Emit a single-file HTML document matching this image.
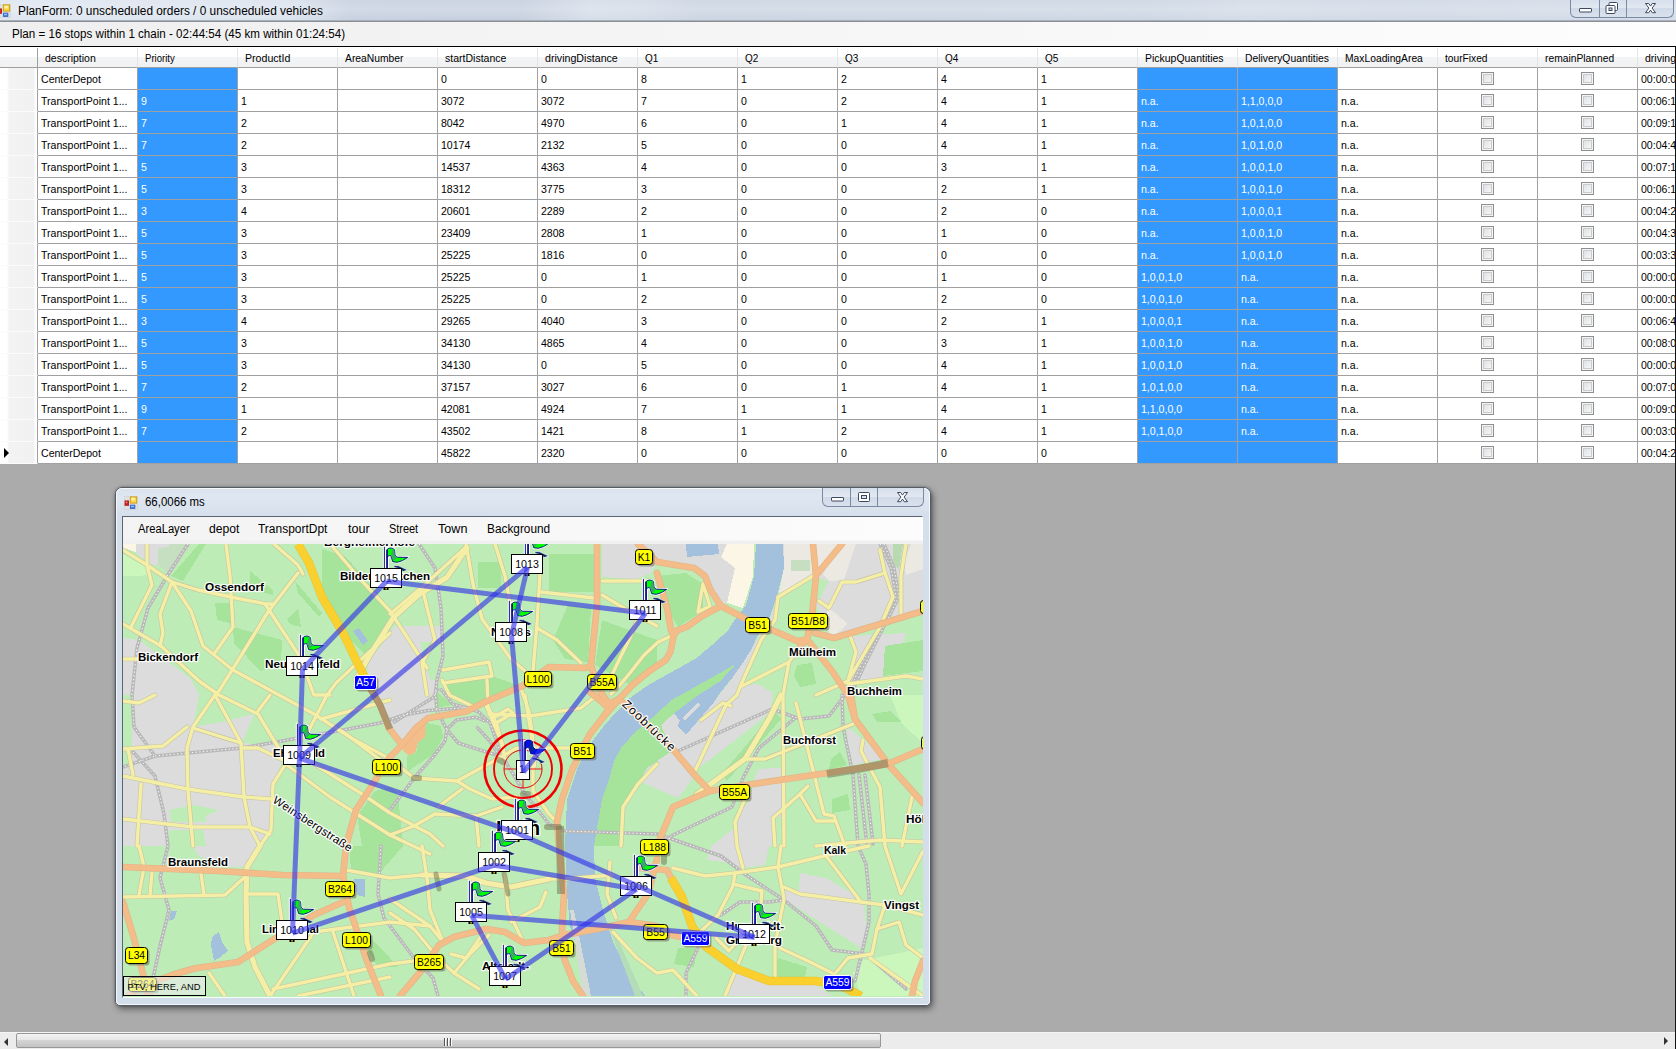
<!DOCTYPE html>
<html lang="en"><head><meta charset="utf-8"><title>PlanForm</title>
<style>
*{box-sizing:border-box}
html,body{margin:0;padding:0}
body{width:1676px;height:1049px;overflow:hidden;position:relative;background:#ababab;
 font-family:"Liberation Sans",sans-serif;color:#000;-webkit-font-smoothing:antialiased}
.abs{position:absolute}
#tbar{left:0;top:0;width:1676px;height:21px;background:linear-gradient(rgba(255,255,255,.10),rgba(255,255,255,.22) 45%,rgba(255,255,255,0) 100%),linear-gradient(90deg,#dfe6f0 0px,#dbe3ee 290px,#c6d0df 350px,#c5cfde 520px,#d5dde9 590px,#d3dbe7 640px,#cad4e2 700px,#ccd6e3 1150px,#d2dbe7 1250px,#cfd8e5 1400px,#d3dce8 1676px)}
#tline{left:0;top:20px;width:1676px;height:2px;background:linear-gradient(#b8bfc9,#7c7f85)}
#ttext{left:17.5px;top:4px;transform:scaleX(.987);font-size:12px;line-height:15px;white-space:nowrap;transform-origin:0 0}
#status{left:0;top:22px;width:1676px;height:24px;background:linear-gradient(90deg,#efefef 0%,#fdfdfd 100%)}
#stext{left:11.5px;top:27px;transform:scaleX(.9666);font-size:12px;line-height:15px;white-space:nowrap;transform-origin:0 0}
#grid{left:0;top:46px;width:1676px;height:418px;background:#fff;border-top:1px solid #000;overflow:hidden}
#grid .rb{position:absolute;right:0;top:0;width:1px;height:418px;background:#000}
.hdr{position:absolute;top:1px;height:20px;background:linear-gradient(#fff 0%,#fff 45%,#f3f4f6 50%,#f0f1f3 100%);
 border-right:1px solid #e3e4e6;border-bottom:1px solid #a0a0a0;font-size:11px;line-height:21px;padding-left:7px;white-space:nowrap;overflow:hidden}
.hdr span,.c span{display:inline-block;transform-origin:0 50%;white-space:nowrap}
.c span{transform:scaleX(.96)}
.rh{position:absolute;left:0;width:38px;height:22px;border-right:1px solid #a0a0a0;border-bottom:1px solid #fbfbfb;
 background:linear-gradient(90deg,#fff 0px,#fff 7px,#f3f3f3 9px,#f1f1f1 34px,#fdfdfd 35px,#fdfdfd 37px)}
.c{position:absolute;height:22px;width:100px;border-right:1px solid #a0a0a0;border-bottom:1px solid #a0a0a0;background:#fff;
 font-size:11px;line-height:21px;padding:1px 0 0 3px;white-space:nowrap;overflow:hidden}
.c.b{background:#3399ff;color:#fff}
.cb{position:absolute;left:43px;top:4px;width:13px;height:13px;border:1px solid #8e8f8f;background:#f4f4f4;padding:1px}
.cb i{display:block;width:9px;height:9px;border:1px solid #c9cbcd;background:linear-gradient(135deg,#dfe2e5,#f6f6f6)}
.arrow{position:absolute;left:4px;top:6px;width:0;height:0;border-left:5px solid #000;border-top:5px solid transparent;border-bottom:5px solid transparent}
#sb{left:0;top:1032px;width:1676px;height:17px;background:#ececec;border-top:1px solid #f4f4f4}
#sb .thumb{position:absolute;left:16px;top:0px;width:865px;height:15px;border:1px solid #979797;border-radius:2px;
 background:linear-gradient(#f3f3f3 0%,#e6e6e6 45%,#d4d4d4 50%,#c3c3c3 100%)}
#sb .ra{position:absolute;left:1664px;top:4px;width:0;height:0;border-left:4px solid #333;border-top:4px solid transparent;border-bottom:4px solid transparent}
#rborder{left:1675px;top:46px;width:1px;height:1003px;background:#111}
#sb .la{position:absolute;left:4px;top:5px;width:0;height:0;border-right:4px solid #333;border-top:4px solid transparent;border-bottom:4px solid transparent}
#sb .grip{position:absolute;left:444px;top:5px;width:8px;height:8px;background:repeating-linear-gradient(90deg,#555 0,#555 1px,#fff 1px,#fff 2px,transparent 2px,transparent 3px)}
/* caption buttons */
.capbtn{position:absolute;border:1px solid #7b8aa3;border-top:none;border-radius:0 0 6px 6px;background:linear-gradient(#d6dfeb,#e3e9f2 50%,#d0dae8 50%,#d9e1ec);overflow:hidden}
.capbtn .d{position:absolute;top:0;width:1px;height:100%;background:#7b8aa3}
/* child window */
#win{left:115px;top:487px;width:816px;height:519px;border-radius:7px 7px 5px 5px;border:1px solid #555c66;
 background:linear-gradient(#d9e2ee 0px,#dfe7f1 10px,#d5dfeb 28px,#d3deeb 100%);box-shadow:2px 3px 6px rgba(0,0,0,.45),0 0 3px rgba(0,0,0,.3)}
#win .inl{position:absolute;left:0;top:0;right:0;bottom:0;border:1px solid #f4f8fc;border-radius:6px 6px 4px 4px}
#wtext{left:28.5px;top:7px;transform:scaleX(.954);font-size:12px;line-height:15px;white-space:nowrap;transform-origin:0 0}
#client{left:6px;top:28px;width:801px;height:482px;border:1px solid #5d6670;border-right-color:#f8fafc;border-bottom-color:#f8fafc;background:#f0f0f0}
#menu{left:0;top:0;width:800px;height:27px;background:linear-gradient(rgba(240,240,240,0) 0px,rgba(240,240,240,0) 23px,#f0f0f0 24px,#f0f0f0 27px),linear-gradient(90deg,#f3f3f3 0%,#fcfcfc 100%)}
#menu span{position:absolute;top:5px;font-size:12px;line-height:15px;white-space:nowrap;transform-origin:0 0}
#map{left:0;top:27px;width:800px;height:453px;overflow:hidden;background:#bdecb6}
</style></head>
<body>
<div id="tbar" class="abs"></div><div id="tline" class="abs"></div>
<svg class="abs" style="left:-3px;top:4px" width="14" height="14" viewBox="0 0 14 14"><rect x=".3" y=".3" width="13.2" height="13.2" fill="#e2e2e2" stroke="#cfcfcf" stroke-width=".6"/><rect x="6.3" y=".9" width="6.4" height="6.2" fill="#ffd640" stroke="#c79a14" stroke-width=".9"/><rect x="7.3" y="1.8" width="3.6" height="2.6" fill="#fff2b0"/><rect x="1" y="4.9" width="3.6" height="4.4" fill="#d62222" stroke="#a31212" stroke-width=".8"/><rect x="1.7" y="5.6" width="1.5" height="1.5" fill="#f49090"/><rect x="6.3" y="9.1" width="4.6" height="3.3" fill="#4c82e4" stroke="#2c5fc4" stroke-width=".8"/><rect x="7.2" y="9.8" width="2.6" height="1.1" fill="#b0ceff"/></svg><div id="ttext" class="abs">PlanForm: 0 unscheduled orders / 0 unscheduled vehicles</div>
<div class="capbtn" style="left:1570px;top:0;width:104px;height:18px"><div class="d" style="left:28px"></div><div class="d" style="left:55px"></div><svg style="position:absolute;left:0;top:0px" width="104" height="18" viewBox="0 0 104 18" fill="#fff" stroke="#3d4861" stroke-width="1"><rect x="8.5" y="8.5" width="12" height="3.5" rx=".5"/><rect x="38" y="2.5" width="8.5" height="8" rx="1"/><rect x="35" y="5.5" width="9" height="8" rx="1"/><rect x="38" y="8" width="3" height="2.5" fill="#d6dfeb"/><path d="M74.5,3.5h3.2l1.8,2.6l1.8,-2.6h3.2l-3.4,4.6l3.4,4.6h-3.2l-1.8,-2.6l-1.8,2.6h-3.2l3.4,-4.6z"/></svg></div>
<div id="status" class="abs"></div>
<div id="stext" class="abs">Plan = 16 stops within 1 chain - 02:44:54 (45 km within 01:24:54)</div>
<div id="grid" class="abs">
<div class="hdr" style="left:0;width:38px;border-right:1px solid #a0a0a0"></div>
<div class="hdr" style="left:38px;width:100px"><span style="transform:scaleX(0.955)">description</span></div>
<div class="hdr" style="left:138px;width:100px"><span style="transform:scaleX(0.87)">Priority</span></div>
<div class="hdr" style="left:238px;width:100px"><span style="transform:scaleX(0.964)">ProductId</span></div>
<div class="hdr" style="left:338px;width:100px"><span style="transform:scaleX(0.9375)">AreaNumber</span></div>
<div class="hdr" style="left:438px;width:100px"><span style="transform:scaleX(0.956)">startDistance</span></div>
<div class="hdr" style="left:538px;width:100px"><span style="transform:scaleX(0.968)">drivingDistance</span></div>
<div class="hdr" style="left:638px;width:100px"><span style="transform:scaleX(0.91)">Q1</span></div>
<div class="hdr" style="left:738px;width:100px"><span style="transform:scaleX(0.91)">Q2</span></div>
<div class="hdr" style="left:838px;width:100px"><span style="transform:scaleX(0.91)">Q3</span></div>
<div class="hdr" style="left:938px;width:100px"><span style="transform:scaleX(0.91)">Q4</span></div>
<div class="hdr" style="left:1038px;width:100px"><span style="transform:scaleX(0.91)">Q5</span></div>
<div class="hdr" style="left:1138px;width:100px"><span style="transform:scaleX(0.951)">PickupQuantities</span></div>
<div class="hdr" style="left:1238px;width:100px"><span style="transform:scaleX(0.94)">DeliveryQuantities</span></div>
<div class="hdr" style="left:1338px;width:100px"><span style="transform:scaleX(0.936)">MaxLoadingArea</span></div>
<div class="hdr" style="left:1438px;width:100px"><span style="transform:scaleX(0.926)">tourFixed</span></div>
<div class="hdr" style="left:1538px;width:100px"><span style="transform:scaleX(0.934)">remainPlanned</span></div>
<div class="hdr" style="left:1638px;width:100px"><span style="transform:scaleX(0.956)">drivingPeriod</span></div>
<div class="rh" style="top:21px"></div><div class="c" style="left:38px;top:21px"><span>CenterDepot</span></div><div class="c b" style="left:138px;top:21px"></div><div class="c" style="left:238px;top:21px"></div><div class="c" style="left:338px;top:21px"></div><div class="c" style="left:438px;top:21px"><span>0</span></div><div class="c" style="left:538px;top:21px"><span>0</span></div><div class="c" style="left:638px;top:21px"><span>8</span></div><div class="c" style="left:738px;top:21px"><span>1</span></div><div class="c" style="left:838px;top:21px"><span>2</span></div><div class="c" style="left:938px;top:21px"><span>4</span></div><div class="c" style="left:1038px;top:21px"><span>1</span></div><div class="c b" style="left:1138px;top:21px"></div><div class="c b" style="left:1238px;top:21px"></div><div class="c" style="left:1338px;top:21px"></div><div class="c" style="left:1438px;top:21px"><div class="cb"><i></i></div></div><div class="c" style="left:1538px;top:21px"><div class="cb"><i></i></div></div><div class="c" style="left:1638px;top:21px"><span>00:00:00</span></div>
<div class="rh" style="top:43px"></div><div class="c" style="left:38px;top:43px"><span>TransportPoint 1...</span></div><div class="c b" style="left:138px;top:43px"><span>9</span></div><div class="c" style="left:238px;top:43px"><span>1</span></div><div class="c" style="left:338px;top:43px"></div><div class="c" style="left:438px;top:43px"><span>3072</span></div><div class="c" style="left:538px;top:43px"><span>3072</span></div><div class="c" style="left:638px;top:43px"><span>7</span></div><div class="c" style="left:738px;top:43px"><span>0</span></div><div class="c" style="left:838px;top:43px"><span>2</span></div><div class="c" style="left:938px;top:43px"><span>4</span></div><div class="c" style="left:1038px;top:43px"><span>1</span></div><div class="c b" style="left:1138px;top:43px"><span>n.a.</span></div><div class="c b" style="left:1238px;top:43px"><span>1,1,0,0,0</span></div><div class="c" style="left:1338px;top:43px"><span>n.a.</span></div><div class="c" style="left:1438px;top:43px"><div class="cb"><i></i></div></div><div class="c" style="left:1538px;top:43px"><div class="cb"><i></i></div></div><div class="c" style="left:1638px;top:43px"><span>00:06:10</span></div>
<div class="rh" style="top:65px"></div><div class="c" style="left:38px;top:65px"><span>TransportPoint 1...</span></div><div class="c b" style="left:138px;top:65px"><span>7</span></div><div class="c" style="left:238px;top:65px"><span>2</span></div><div class="c" style="left:338px;top:65px"></div><div class="c" style="left:438px;top:65px"><span>8042</span></div><div class="c" style="left:538px;top:65px"><span>4970</span></div><div class="c" style="left:638px;top:65px"><span>6</span></div><div class="c" style="left:738px;top:65px"><span>0</span></div><div class="c" style="left:838px;top:65px"><span>1</span></div><div class="c" style="left:938px;top:65px"><span>4</span></div><div class="c" style="left:1038px;top:65px"><span>1</span></div><div class="c b" style="left:1138px;top:65px"><span>n.a.</span></div><div class="c b" style="left:1238px;top:65px"><span>1,0,1,0,0</span></div><div class="c" style="left:1338px;top:65px"><span>n.a.</span></div><div class="c" style="left:1438px;top:65px"><div class="cb"><i></i></div></div><div class="c" style="left:1538px;top:65px"><div class="cb"><i></i></div></div><div class="c" style="left:1638px;top:65px"><span>00:09:12</span></div>
<div class="rh" style="top:87px"></div><div class="c" style="left:38px;top:87px"><span>TransportPoint 1...</span></div><div class="c b" style="left:138px;top:87px"><span>7</span></div><div class="c" style="left:238px;top:87px"><span>2</span></div><div class="c" style="left:338px;top:87px"></div><div class="c" style="left:438px;top:87px"><span>10174</span></div><div class="c" style="left:538px;top:87px"><span>2132</span></div><div class="c" style="left:638px;top:87px"><span>5</span></div><div class="c" style="left:738px;top:87px"><span>0</span></div><div class="c" style="left:838px;top:87px"><span>0</span></div><div class="c" style="left:938px;top:87px"><span>4</span></div><div class="c" style="left:1038px;top:87px"><span>1</span></div><div class="c b" style="left:1138px;top:87px"><span>n.a.</span></div><div class="c b" style="left:1238px;top:87px"><span>1,0,1,0,0</span></div><div class="c" style="left:1338px;top:87px"><span>n.a.</span></div><div class="c" style="left:1438px;top:87px"><div class="cb"><i></i></div></div><div class="c" style="left:1538px;top:87px"><div class="cb"><i></i></div></div><div class="c" style="left:1638px;top:87px"><span>00:04:41</span></div>
<div class="rh" style="top:109px"></div><div class="c" style="left:38px;top:109px"><span>TransportPoint 1...</span></div><div class="c b" style="left:138px;top:109px"><span>5</span></div><div class="c" style="left:238px;top:109px"><span>3</span></div><div class="c" style="left:338px;top:109px"></div><div class="c" style="left:438px;top:109px"><span>14537</span></div><div class="c" style="left:538px;top:109px"><span>4363</span></div><div class="c" style="left:638px;top:109px"><span>4</span></div><div class="c" style="left:738px;top:109px"><span>0</span></div><div class="c" style="left:838px;top:109px"><span>0</span></div><div class="c" style="left:938px;top:109px"><span>3</span></div><div class="c" style="left:1038px;top:109px"><span>1</span></div><div class="c b" style="left:1138px;top:109px"><span>n.a.</span></div><div class="c b" style="left:1238px;top:109px"><span>1,0,0,1,0</span></div><div class="c" style="left:1338px;top:109px"><span>n.a.</span></div><div class="c" style="left:1438px;top:109px"><div class="cb"><i></i></div></div><div class="c" style="left:1538px;top:109px"><div class="cb"><i></i></div></div><div class="c" style="left:1638px;top:109px"><span>00:07:16</span></div>
<div class="rh" style="top:131px"></div><div class="c" style="left:38px;top:131px"><span>TransportPoint 1...</span></div><div class="c b" style="left:138px;top:131px"><span>5</span></div><div class="c" style="left:238px;top:131px"><span>3</span></div><div class="c" style="left:338px;top:131px"></div><div class="c" style="left:438px;top:131px"><span>18312</span></div><div class="c" style="left:538px;top:131px"><span>3775</span></div><div class="c" style="left:638px;top:131px"><span>3</span></div><div class="c" style="left:738px;top:131px"><span>0</span></div><div class="c" style="left:838px;top:131px"><span>0</span></div><div class="c" style="left:938px;top:131px"><span>2</span></div><div class="c" style="left:1038px;top:131px"><span>1</span></div><div class="c b" style="left:1138px;top:131px"><span>n.a.</span></div><div class="c b" style="left:1238px;top:131px"><span>1,0,0,1,0</span></div><div class="c" style="left:1338px;top:131px"><span>n.a.</span></div><div class="c" style="left:1438px;top:131px"><div class="cb"><i></i></div></div><div class="c" style="left:1538px;top:131px"><div class="cb"><i></i></div></div><div class="c" style="left:1638px;top:131px"><span>00:06:10</span></div>
<div class="rh" style="top:153px"></div><div class="c" style="left:38px;top:153px"><span>TransportPoint 1...</span></div><div class="c b" style="left:138px;top:153px"><span>3</span></div><div class="c" style="left:238px;top:153px"><span>4</span></div><div class="c" style="left:338px;top:153px"></div><div class="c" style="left:438px;top:153px"><span>20601</span></div><div class="c" style="left:538px;top:153px"><span>2289</span></div><div class="c" style="left:638px;top:153px"><span>2</span></div><div class="c" style="left:738px;top:153px"><span>0</span></div><div class="c" style="left:838px;top:153px"><span>0</span></div><div class="c" style="left:938px;top:153px"><span>2</span></div><div class="c" style="left:1038px;top:153px"><span>0</span></div><div class="c b" style="left:1138px;top:153px"><span>n.a.</span></div><div class="c b" style="left:1238px;top:153px"><span>1,0,0,0,1</span></div><div class="c" style="left:1338px;top:153px"><span>n.a.</span></div><div class="c" style="left:1438px;top:153px"><div class="cb"><i></i></div></div><div class="c" style="left:1538px;top:153px"><div class="cb"><i></i></div></div><div class="c" style="left:1638px;top:153px"><span>00:04:23</span></div>
<div class="rh" style="top:175px"></div><div class="c" style="left:38px;top:175px"><span>TransportPoint 1...</span></div><div class="c b" style="left:138px;top:175px"><span>5</span></div><div class="c" style="left:238px;top:175px"><span>3</span></div><div class="c" style="left:338px;top:175px"></div><div class="c" style="left:438px;top:175px"><span>23409</span></div><div class="c" style="left:538px;top:175px"><span>2808</span></div><div class="c" style="left:638px;top:175px"><span>1</span></div><div class="c" style="left:738px;top:175px"><span>0</span></div><div class="c" style="left:838px;top:175px"><span>0</span></div><div class="c" style="left:938px;top:175px"><span>1</span></div><div class="c" style="left:1038px;top:175px"><span>0</span></div><div class="c b" style="left:1138px;top:175px"><span>n.a.</span></div><div class="c b" style="left:1238px;top:175px"><span>1,0,0,1,0</span></div><div class="c" style="left:1338px;top:175px"><span>n.a.</span></div><div class="c" style="left:1438px;top:175px"><div class="cb"><i></i></div></div><div class="c" style="left:1538px;top:175px"><div class="cb"><i></i></div></div><div class="c" style="left:1638px;top:175px"><span>00:04:39</span></div>
<div class="rh" style="top:197px"></div><div class="c" style="left:38px;top:197px"><span>TransportPoint 1...</span></div><div class="c b" style="left:138px;top:197px"><span>5</span></div><div class="c" style="left:238px;top:197px"><span>3</span></div><div class="c" style="left:338px;top:197px"></div><div class="c" style="left:438px;top:197px"><span>25225</span></div><div class="c" style="left:538px;top:197px"><span>1816</span></div><div class="c" style="left:638px;top:197px"><span>0</span></div><div class="c" style="left:738px;top:197px"><span>0</span></div><div class="c" style="left:838px;top:197px"><span>0</span></div><div class="c" style="left:938px;top:197px"><span>0</span></div><div class="c" style="left:1038px;top:197px"><span>0</span></div><div class="c b" style="left:1138px;top:197px"><span>n.a.</span></div><div class="c b" style="left:1238px;top:197px"><span>1,0,0,1,0</span></div><div class="c" style="left:1338px;top:197px"><span>n.a.</span></div><div class="c" style="left:1438px;top:197px"><div class="cb"><i></i></div></div><div class="c" style="left:1538px;top:197px"><div class="cb"><i></i></div></div><div class="c" style="left:1638px;top:197px"><span>00:03:32</span></div>
<div class="rh" style="top:219px"></div><div class="c" style="left:38px;top:219px"><span>TransportPoint 1...</span></div><div class="c b" style="left:138px;top:219px"><span>5</span></div><div class="c" style="left:238px;top:219px"><span>3</span></div><div class="c" style="left:338px;top:219px"></div><div class="c" style="left:438px;top:219px"><span>25225</span></div><div class="c" style="left:538px;top:219px"><span>0</span></div><div class="c" style="left:638px;top:219px"><span>1</span></div><div class="c" style="left:738px;top:219px"><span>0</span></div><div class="c" style="left:838px;top:219px"><span>0</span></div><div class="c" style="left:938px;top:219px"><span>1</span></div><div class="c" style="left:1038px;top:219px"><span>0</span></div><div class="c b" style="left:1138px;top:219px"><span>1,0,0,1,0</span></div><div class="c b" style="left:1238px;top:219px"><span>n.a.</span></div><div class="c" style="left:1338px;top:219px"><span>n.a.</span></div><div class="c" style="left:1438px;top:219px"><div class="cb"><i></i></div></div><div class="c" style="left:1538px;top:219px"><div class="cb"><i></i></div></div><div class="c" style="left:1638px;top:219px"><span>00:00:00</span></div>
<div class="rh" style="top:241px"></div><div class="c" style="left:38px;top:241px"><span>TransportPoint 1...</span></div><div class="c b" style="left:138px;top:241px"><span>5</span></div><div class="c" style="left:238px;top:241px"><span>3</span></div><div class="c" style="left:338px;top:241px"></div><div class="c" style="left:438px;top:241px"><span>25225</span></div><div class="c" style="left:538px;top:241px"><span>0</span></div><div class="c" style="left:638px;top:241px"><span>2</span></div><div class="c" style="left:738px;top:241px"><span>0</span></div><div class="c" style="left:838px;top:241px"><span>0</span></div><div class="c" style="left:938px;top:241px"><span>2</span></div><div class="c" style="left:1038px;top:241px"><span>0</span></div><div class="c b" style="left:1138px;top:241px"><span>1,0,0,1,0</span></div><div class="c b" style="left:1238px;top:241px"><span>n.a.</span></div><div class="c" style="left:1338px;top:241px"><span>n.a.</span></div><div class="c" style="left:1438px;top:241px"><div class="cb"><i></i></div></div><div class="c" style="left:1538px;top:241px"><div class="cb"><i></i></div></div><div class="c" style="left:1638px;top:241px"><span>00:00:00</span></div>
<div class="rh" style="top:263px"></div><div class="c" style="left:38px;top:263px"><span>TransportPoint 1...</span></div><div class="c b" style="left:138px;top:263px"><span>3</span></div><div class="c" style="left:238px;top:263px"><span>4</span></div><div class="c" style="left:338px;top:263px"></div><div class="c" style="left:438px;top:263px"><span>29265</span></div><div class="c" style="left:538px;top:263px"><span>4040</span></div><div class="c" style="left:638px;top:263px"><span>3</span></div><div class="c" style="left:738px;top:263px"><span>0</span></div><div class="c" style="left:838px;top:263px"><span>0</span></div><div class="c" style="left:938px;top:263px"><span>2</span></div><div class="c" style="left:1038px;top:263px"><span>1</span></div><div class="c b" style="left:1138px;top:263px"><span>1,0,0,0,1</span></div><div class="c b" style="left:1238px;top:263px"><span>n.a.</span></div><div class="c" style="left:1338px;top:263px"><span>n.a.</span></div><div class="c" style="left:1438px;top:263px"><div class="cb"><i></i></div></div><div class="c" style="left:1538px;top:263px"><div class="cb"><i></i></div></div><div class="c" style="left:1638px;top:263px"><span>00:06:44</span></div>
<div class="rh" style="top:285px"></div><div class="c" style="left:38px;top:285px"><span>TransportPoint 1...</span></div><div class="c b" style="left:138px;top:285px"><span>5</span></div><div class="c" style="left:238px;top:285px"><span>3</span></div><div class="c" style="left:338px;top:285px"></div><div class="c" style="left:438px;top:285px"><span>34130</span></div><div class="c" style="left:538px;top:285px"><span>4865</span></div><div class="c" style="left:638px;top:285px"><span>4</span></div><div class="c" style="left:738px;top:285px"><span>0</span></div><div class="c" style="left:838px;top:285px"><span>0</span></div><div class="c" style="left:938px;top:285px"><span>3</span></div><div class="c" style="left:1038px;top:285px"><span>1</span></div><div class="c b" style="left:1138px;top:285px"><span>1,0,0,1,0</span></div><div class="c b" style="left:1238px;top:285px"><span>n.a.</span></div><div class="c" style="left:1338px;top:285px"><span>n.a.</span></div><div class="c" style="left:1438px;top:285px"><div class="cb"><i></i></div></div><div class="c" style="left:1538px;top:285px"><div class="cb"><i></i></div></div><div class="c" style="left:1638px;top:285px"><span>00:08:06</span></div>
<div class="rh" style="top:307px"></div><div class="c" style="left:38px;top:307px"><span>TransportPoint 1...</span></div><div class="c b" style="left:138px;top:307px"><span>5</span></div><div class="c" style="left:238px;top:307px"><span>3</span></div><div class="c" style="left:338px;top:307px"></div><div class="c" style="left:438px;top:307px"><span>34130</span></div><div class="c" style="left:538px;top:307px"><span>0</span></div><div class="c" style="left:638px;top:307px"><span>5</span></div><div class="c" style="left:738px;top:307px"><span>0</span></div><div class="c" style="left:838px;top:307px"><span>0</span></div><div class="c" style="left:938px;top:307px"><span>4</span></div><div class="c" style="left:1038px;top:307px"><span>1</span></div><div class="c b" style="left:1138px;top:307px"><span>1,0,0,1,0</span></div><div class="c b" style="left:1238px;top:307px"><span>n.a.</span></div><div class="c" style="left:1338px;top:307px"><span>n.a.</span></div><div class="c" style="left:1438px;top:307px"><div class="cb"><i></i></div></div><div class="c" style="left:1538px;top:307px"><div class="cb"><i></i></div></div><div class="c" style="left:1638px;top:307px"><span>00:00:00</span></div>
<div class="rh" style="top:329px"></div><div class="c" style="left:38px;top:329px"><span>TransportPoint 1...</span></div><div class="c b" style="left:138px;top:329px"><span>7</span></div><div class="c" style="left:238px;top:329px"><span>2</span></div><div class="c" style="left:338px;top:329px"></div><div class="c" style="left:438px;top:329px"><span>37157</span></div><div class="c" style="left:538px;top:329px"><span>3027</span></div><div class="c" style="left:638px;top:329px"><span>6</span></div><div class="c" style="left:738px;top:329px"><span>0</span></div><div class="c" style="left:838px;top:329px"><span>1</span></div><div class="c" style="left:938px;top:329px"><span>4</span></div><div class="c" style="left:1038px;top:329px"><span>1</span></div><div class="c b" style="left:1138px;top:329px"><span>1,0,1,0,0</span></div><div class="c b" style="left:1238px;top:329px"><span>n.a.</span></div><div class="c" style="left:1338px;top:329px"><span>n.a.</span></div><div class="c" style="left:1438px;top:329px"><div class="cb"><i></i></div></div><div class="c" style="left:1538px;top:329px"><div class="cb"><i></i></div></div><div class="c" style="left:1638px;top:329px"><span>00:07:02</span></div>
<div class="rh" style="top:351px"></div><div class="c" style="left:38px;top:351px"><span>TransportPoint 1...</span></div><div class="c b" style="left:138px;top:351px"><span>9</span></div><div class="c" style="left:238px;top:351px"><span>1</span></div><div class="c" style="left:338px;top:351px"></div><div class="c" style="left:438px;top:351px"><span>42081</span></div><div class="c" style="left:538px;top:351px"><span>4924</span></div><div class="c" style="left:638px;top:351px"><span>7</span></div><div class="c" style="left:738px;top:351px"><span>1</span></div><div class="c" style="left:838px;top:351px"><span>1</span></div><div class="c" style="left:938px;top:351px"><span>4</span></div><div class="c" style="left:1038px;top:351px"><span>1</span></div><div class="c b" style="left:1138px;top:351px"><span>1,1,0,0,0</span></div><div class="c b" style="left:1238px;top:351px"><span>n.a.</span></div><div class="c" style="left:1338px;top:351px"><span>n.a.</span></div><div class="c" style="left:1438px;top:351px"><div class="cb"><i></i></div></div><div class="c" style="left:1538px;top:351px"><div class="cb"><i></i></div></div><div class="c" style="left:1638px;top:351px"><span>00:09:03</span></div>
<div class="rh" style="top:373px"></div><div class="c" style="left:38px;top:373px"><span>TransportPoint 1...</span></div><div class="c b" style="left:138px;top:373px"><span>7</span></div><div class="c" style="left:238px;top:373px"><span>2</span></div><div class="c" style="left:338px;top:373px"></div><div class="c" style="left:438px;top:373px"><span>43502</span></div><div class="c" style="left:538px;top:373px"><span>1421</span></div><div class="c" style="left:638px;top:373px"><span>8</span></div><div class="c" style="left:738px;top:373px"><span>1</span></div><div class="c" style="left:838px;top:373px"><span>2</span></div><div class="c" style="left:938px;top:373px"><span>4</span></div><div class="c" style="left:1038px;top:373px"><span>1</span></div><div class="c b" style="left:1138px;top:373px"><span>1,0,1,0,0</span></div><div class="c b" style="left:1238px;top:373px"><span>n.a.</span></div><div class="c" style="left:1338px;top:373px"><span>n.a.</span></div><div class="c" style="left:1438px;top:373px"><div class="cb"><i></i></div></div><div class="c" style="left:1538px;top:373px"><div class="cb"><i></i></div></div><div class="c" style="left:1638px;top:373px"><span>00:03:05</span></div>
<div class="rh" style="top:395px"><div class="arrow"></div></div><div class="c" style="left:38px;top:395px"><span>CenterDepot</span></div><div class="c b" style="left:138px;top:395px"></div><div class="c" style="left:238px;top:395px"></div><div class="c" style="left:338px;top:395px"></div><div class="c" style="left:438px;top:395px"><span>45822</span></div><div class="c" style="left:538px;top:395px"><span>2320</span></div><div class="c" style="left:638px;top:395px"><span>0</span></div><div class="c" style="left:738px;top:395px"><span>0</span></div><div class="c" style="left:838px;top:395px"><span>0</span></div><div class="c" style="left:938px;top:395px"><span>0</span></div><div class="c" style="left:1038px;top:395px"><span>0</span></div><div class="c b" style="left:1138px;top:395px"></div><div class="c b" style="left:1238px;top:395px"></div><div class="c" style="left:1338px;top:395px"></div><div class="c" style="left:1438px;top:395px"><div class="cb"><i></i></div></div><div class="c" style="left:1538px;top:395px"><div class="cb"><i></i></div></div><div class="c" style="left:1638px;top:395px"><span>00:04:22</span></div>
<div class="rb"></div></div>
<div id="win" class="abs"><div class="inl"></div>
<svg class="abs" style="left:8px;top:8px" width="14" height="14" viewBox="0 0 14 14"><rect x=".3" y=".3" width="13.2" height="13.2" fill="#e2e2e2" stroke="#cfcfcf" stroke-width=".6"/><rect x="6.3" y=".9" width="6.4" height="6.2" fill="#ffd640" stroke="#c79a14" stroke-width=".9"/><rect x="7.3" y="1.8" width="3.6" height="2.6" fill="#fff2b0"/><rect x="1" y="4.9" width="3.6" height="4.4" fill="#d62222" stroke="#a31212" stroke-width=".8"/><rect x="1.7" y="5.6" width="1.5" height="1.5" fill="#f49090"/><rect x="6.3" y="9.1" width="4.6" height="3.3" fill="#4c82e4" stroke="#2c5fc4" stroke-width=".8"/><rect x="7.2" y="9.8" width="2.6" height="1.1" fill="#b0ceff"/></svg><div id="wtext" class="abs">66,0066 ms</div>
<div class="capbtn" style="left:706px;top:0;width:102px;height:19px"><div class="d" style="left:27px"></div><div class="d" style="left:54px"></div><svg style="position:absolute;left:0;top:1px" width="104" height="18" viewBox="0 0 104 18" fill="#fff" stroke="#3d4861" stroke-width="1"><rect x="8.5" y="8.5" width="12" height="3.5" rx=".5"/><rect x="35.5" y="3.5" width="11" height="9" rx="1"/><rect x="38.5" y="6.5" width="5" height="3" fill="#d6dfeb"/><path d="M74.5,3.5h3.2l1.8,2.6l1.8,-2.6h3.2l-3.4,4.6l3.4,4.6h-3.2l-1.8,-2.6l-1.8,2.6h-3.2l3.4,-4.6z"/></svg></div>
<div id="client" class="abs"><div id="menu" class="abs"><span class="m" style="left:15px;transform:scaleX(0.933)">AreaLayer</span><span class="m" style="left:86px;transform:scaleX(1.013)">depot</span><span class="m" style="left:135px;transform:scaleX(0.997)">TransportDpt</span><span class="m" style="left:225px;transform:scaleX(1.05)">tour</span><span class="m" style="left:266px;transform:scaleX(0.91)">Street</span><span class="m" style="left:315px;transform:scaleX(1.05)">Town</span><span class="m" style="left:364px;transform:scaleX(0.986)">Background</span></div>
<div id="map" class="abs">
<svg width="800" height="452" viewBox="0 0 800 452" font-family="'Liberation Sans',sans-serif" style="display:block">
<rect width="800" height="452" fill="#bdecb6"/>
<g shape-rendering="crispEdges">
<polygon points="0,10 23.5,23.7 24.5,31.3 0,32.3" fill="#cbf7bd"/>
<polygon points="767,151 800,151 800,199 779,180" fill="#cbf7bd"/>
<polygon points="738,417 800,404 800,452 738,452 730,429" fill="#cbf7bd"/>
<polygon points="0,94 16,96 68,135 76,151 70,183 99,178 131,170 119,199 159,202 158,221 148,243 148,286 139,302 137,302 124,323 105,323 76,312 70,302 0,302" fill="#dcdcdc"/>
<polygon points="13,0 47.4,0 45.5,2.7 35,4.6 35,20.8 26.4,20.8 13,8.4" fill="#dcdcdc"/>
<polygon points="244,126 246.4,116 257,103 272,81.5 318.5,81.5 318.5,97.5 297.2,97.5 302.5,124.2 308,136 314.3,136 310.5,164.6 302.8,174.2 293.3,183.7 279,198 265.6,183.7 257,161 249,151" fill="#dcdcdc"/>
<polygon points="479,0 604,0 598,13 612,24 604,59 596,61 582,32 571,24 534,18 528,29 514,35 479,33" fill="#dcdcdc"/>
<polygon points="660,0 800,0 800,67 779,70 709,94 693,61 706,37 689,32 655,53 661,24" fill="#dcdcdc"/>
<polygon points="646,76 655,53 652,76 638,96 630.7,114 618.2,141.9 600,176 580,190 563.4,190.4 591.1,158 609.7,133.3 621,117 630,102" fill="#dcdcdc"/>
<polygon points="730,92 783,89 776,112 762,132 725,140 733,108" fill="#dcdcdc"/>
<polygon points="563,190 600,176 618,142 634.5,140 649.7,148.6 647.8,161.9 657,165.7 649,167 620,190 572,227 568.5,236 555,254 520.8,239 515,230 524,224 549,207" fill="#dcdcdc"/>
<polygon points="635,225 658,223.5 660,272 650,274 649,302 646,302 642,321 618,324 600,318 584,316 588.6,302 612.5,282.8 612.5,275 625,258 629.6,244.6 631.6,235" fill="#dcdcdc"/>
<polygon points="724,183 741,196 760,215 730,221 725,199" fill="#dcdcdc"/>
<polygon points="522,231 534,227 534,247" fill="#dcdcdc"/>
<polygon points="677,329 703,334 730,350 741,363 744,391 738,404 661,355 661,347 676,348" fill="#dcdcdc"/>
<polygon points="610,429 646,437 693,441 709,452 604,452" fill="#dcdcdc"/>
<polygon points="587,302 614,302 618,324" fill="#dcdcdc"/>
<polygon points="46,266 70,261 96,266 83,272 83,278 48,278" fill="#bdecb6"/>
<polygon points="46,286 80,286 83,302 46,302" fill="#bdecb6"/>
<polygon points="0,151 10,151 8,221 0,221" fill="#bdecb6"/>
<polygon points="119,199 131,170 150,160 165,200 159,202" fill="#bdecb6"/>
<polygon points="76,0 48,32 60,37 83,0" fill="#a6e39b"/>
<polygon points="92,59 108,59 110,80 94,76" fill="#a6e39b"/>
<polygon points="110,83 159,96 158,121 137,127 111,99" fill="#a6e39b"/>
<polygon points="164,75 175,64 178,83 167,80" fill="#a6e39b"/>
<polygon points="199,5 223,13 267,64 267,89 242,110 220,89 199,53" fill="#a6e39b"/>
<polygon points="127,27 150,46 150,51 127,45" fill="#a6e39b"/>
<polygon points="172,37 199,69 196,73 175,49" fill="#a6e39b"/>
<polygon points="355,18 378,18 378,44 355,44" fill="#a6e39b"/>
<polygon points="426,10 471,10 471,48 426,48" fill="#a6e39b"/>
<polygon points="445,61 468,64 465,118 442,115 430,96" fill="#a6e39b"/>
<polygon points="479,76 506,86 534,96 534,121 506,140 472,121" fill="#a6e39b"/>
<polygon points="322,139 369,132 394,141 362,157 350.6,162 327.6,151.3" fill="#a6e39b"/>
<polygon points="314.3,148.4 329.6,160.8 314.3,163.7" fill="#a6e39b"/>
<polygon points="534,32 563,29 580,40 580,64 575,70 555,83 544,64" fill="#a6e39b"/>
<polygon points="674,121 689,119 693,140 677,143 671,132" fill="#a6e39b"/>
<polygon points="762,102 800,96 800,127 760,132" fill="#a6e39b"/>
<polygon points="252,247 267,243 275,250 280,302 255,331 228,326 226,302 239,302 234,272" fill="#a6e39b"/>
<polygon points="302.8,179 318,181.8 320,193.3 310.5,210.5 295.2,220 284.7,227.6 283.7,212.4 293.3,208.6 295.2,198 301.9,193.3" fill="#a6e39b"/>
<polygon points="652,167 658,175 633,204 604,237 598,231" fill="#a6e39b"/>
<polygon points="749,170 768,167 778,178 754,178" fill="#a6e39b"/>
<polygon points="709,255 725,250 727,266 709,269" fill="#a6e39b"/>
<polygon points="708,215 717,208 724,221 706,226" fill="#a6e39b"/>
<polygon points="245,391 267,414 275,423 255,423 239,398" fill="#a6e39b"/>
<polygon points="655,414 684,423 682,434 649,434" fill="#a6e39b"/>
<polygon points="555,404 574,404 571,423 551,420" fill="#a6e39b"/>
<polygon points="0,0 13,0 13,8.4 0,3.6" fill="#fcf6e6"/>
<polygon points="604,0 631,0 630,32 620,64 604,59 612,24 598,13" fill="#fcf6e6"/>
<polygon points="661,0 690,0 693,32 689,32 655,53 661,24" fill="#ece9e2"/>
<polygon points="692,0 719,0 695,29" fill="#ece9e2"/>
<polygon points="719,0 733,0 721,36 706,37 700,30" fill="#ece9e2"/>
<polygon points="788,0 800,0 800,25 783,31 781,19" fill="#ece9e2"/>
<polygon points="706,64 725,80 709,94 700,75" fill="#ece9e2"/>
<polygon points="770,0 780,0 776,25 770,20" fill="#b9d9b0"/>
<polygon points="633,0 631,32 623,61 611.6,76 604.9,86.5 592.5,98 573.4,114.2 549.5,127.6 525.6,140.9 506.5,154.3 493.7,167.5 479.4,183.7 470.8,195.2 462,210 455,223 444,255 442,302 444,350 447,382 452,398 458,429 468,452 522,452 506,429 490,398 480,366 472,334 471,302 479,255 486,236 491,217 498.5,203 513,187.5 529,174 538,181 554.8,182.8 563.4,190.4 591.1,158 597.2,148.6 609.7,133.3 621.1,117 628.7,104.6 634.5,92.2 646,76 655,48 661,24 660,0" fill="#a3c1dd"/>
<polygon points="610.6,121.3 584.5,136 548.5,156.2 529,174 513,187.5 498.5,203 491,217 486,236 479,255 471,302 498,302 500,263 515,240 524,224 549,207 538,181 551,169.4 554.3,166.7 573.4,152.4 597.2,137.1 610.6,122.8" fill="#a6e39b"/>
<polygon points="538,181 551,169.4 556.7,176.1 554.8,182.8 563.4,190.4 572,200 549,207" fill="#dcdcdc"/>
<polygon points="575,159 578,161 562,176 559,174" fill="#dcdcdc"/>
<polygon points="563,0 595,0 596,10 564,13" fill="#a3c1dd"/>
<polygon points="48,367 54,367 51,375 46,377" fill="#a3c1dd"/>
<polygon points="89,393 96,388 99,398 105,407 96,414 91,417 88,401" fill="#a3c1dd"/>
<polygon points="231,335 242,335 242,353 234,351" fill="#a3c1dd"/>
<polygon points="230,87 236,84 245,97 240,101" fill="#a3c1dd"/>
<polygon points="447,366 451,366 468,452 460,452 452,398" fill="#d6dbd6"/>
<polygon points="487,386 491,386 520,452 512,452 496,410" fill="#b5dcb8"/>
<polygon points="668,16 687,16 687,27 668,27" fill="#c5dfc0"/>
<polygon points="35,4.6 45.5,2.7 47.4,0 64.6,0 45.5,29.4 35,20.8" fill="#c5dfc0"/>
</g>
<g>
<polyline points="65,0 46,29 25,64 14,104 9,151 11,183 32,212 0,223" fill="none" stroke="#b9b9b9" stroke-width="3.5" stroke-linejoin="round" stroke-linecap="round"/>
<polyline points="32,212 119,204 159,197 220,186 257,179 281,171 305,166.5 343,163.7 355,167.5 367,179 372,193 379,212 391,231.5 402,250 426,280 442,287 534,290 563,300 598,312 623,331 661,356 693,382 709,406 741,410" fill="none" stroke="#b9b9b9" stroke-width="3.5" stroke-linejoin="round" stroke-linecap="round"/>
<polyline points="10,208 32,232 41,270 45,302 37,334 46,366 38,398 30,434 28,452" fill="none" stroke="#b9b9b9" stroke-width="3.5" stroke-linejoin="round" stroke-linecap="round"/>
<polyline points="296,0 312,24 318,64 320,112 314,136 312.4,150 314.3,167.5 323.8,185.6 322,197 310.5,212.4 293.3,231.5 267,266" fill="none" stroke="#b9b9b9" stroke-width="3.5" stroke-linejoin="round" stroke-linecap="round"/>
<polyline points="323.8,185.6 335.3,199 352.5,204.7 371.6,210.5" fill="none" stroke="#b9b9b9" stroke-width="3.5" stroke-linejoin="round" stroke-linecap="round"/>
<polyline points="271.3,178 310.5,153.2 314.3,145.5" fill="none" stroke="#b9b9b9" stroke-width="3.5" stroke-linejoin="round" stroke-linecap="round"/>
<polyline points="318,145.5 329.6,160 343,163.7" fill="none" stroke="#b9b9b9" stroke-width="3.5" stroke-linejoin="round" stroke-linecap="round"/>
<polyline points="323.8,185.6 333.4,176 352.5,173.2 362,177" fill="none" stroke="#b9b9b9" stroke-width="3.5" stroke-linejoin="round" stroke-linecap="round"/>
<polyline points="354.4,183.7 366.8,197 374.4,208.6" fill="none" stroke="#b9b9b9" stroke-width="3.5" stroke-linejoin="round" stroke-linecap="round"/>
<polyline points="757,0 768,24 773,53 754,89 738,121 728,143 722,151 706,172 677,175 649,165 555,207" fill="none" stroke="#b9b9b9" stroke-width="3.5" stroke-linejoin="round" stroke-linecap="round"/>
<polyline points="761,0 771,24 776,53 757,90 741,122 731,144" fill="none" stroke="#b9b9b9" stroke-width="3.5" stroke-linejoin="round" stroke-linecap="round"/>
<polyline points="719,151 720,183 730,231 735,302 743,320 746,350 746,378 740,404 732,437" fill="none" stroke="#b9b9b9" stroke-width="3.5" stroke-linejoin="round" stroke-linecap="round"/>
<polyline points="736,231 744,302" fill="none" stroke="#b9b9b9" stroke-width="3.5" stroke-linejoin="round" stroke-linecap="round"/>
<polyline points="742,231 750,300" fill="none" stroke="#b9b9b9" stroke-width="3.5" stroke-linejoin="round" stroke-linecap="round"/>
<polyline points="671,175 636,204 620,234 609,263 550,291 534,302" fill="none" stroke="#b9b9b9" stroke-width="3.5" stroke-linejoin="round" stroke-linecap="round"/>
<polyline points="258,302 255,350 261,374 267,382 291,414 310,434 315,452" fill="none" stroke="#b9b9b9" stroke-width="3.5" stroke-linejoin="round" stroke-linecap="round"/>
<polyline points="598,371 617,358 646,358 661,356" fill="none" stroke="#b9b9b9" stroke-width="3.5" stroke-linejoin="round" stroke-linecap="round"/>
<polyline points="747,414 783,445" fill="none" stroke="#b9b9b9" stroke-width="3.5" stroke-linejoin="round" stroke-linecap="round"/>
<polyline points="563,452 563,429 575,404" fill="none" stroke="#b9b9b9" stroke-width="3.5" stroke-linejoin="round" stroke-linecap="round"/>
<polyline points="65,0 46,29 25,64 14,104 9,151 11,183 32,212 0,223" fill="none" stroke="#fff" stroke-width="1" stroke-linejoin="round" stroke-linecap="butt" stroke-dasharray="1.3 2.4"/>
<polyline points="32,212 119,204 159,197 220,186 257,179 281,171 305,166.5 343,163.7 355,167.5 367,179 372,193 379,212 391,231.5 402,250 426,280 442,287 534,290 563,300 598,312 623,331 661,356 693,382 709,406 741,410" fill="none" stroke="#fff" stroke-width="1" stroke-linejoin="round" stroke-linecap="butt" stroke-dasharray="1.3 2.4"/>
<polyline points="10,208 32,232 41,270 45,302 37,334 46,366 38,398 30,434 28,452" fill="none" stroke="#fff" stroke-width="1" stroke-linejoin="round" stroke-linecap="butt" stroke-dasharray="1.3 2.4"/>
<polyline points="296,0 312,24 318,64 320,112 314,136 312.4,150 314.3,167.5 323.8,185.6 322,197 310.5,212.4 293.3,231.5 267,266" fill="none" stroke="#fff" stroke-width="1" stroke-linejoin="round" stroke-linecap="butt" stroke-dasharray="1.3 2.4"/>
<polyline points="323.8,185.6 335.3,199 352.5,204.7 371.6,210.5" fill="none" stroke="#fff" stroke-width="1" stroke-linejoin="round" stroke-linecap="butt" stroke-dasharray="1.3 2.4"/>
<polyline points="271.3,178 310.5,153.2 314.3,145.5" fill="none" stroke="#fff" stroke-width="1" stroke-linejoin="round" stroke-linecap="butt" stroke-dasharray="1.3 2.4"/>
<polyline points="318,145.5 329.6,160 343,163.7" fill="none" stroke="#fff" stroke-width="1" stroke-linejoin="round" stroke-linecap="butt" stroke-dasharray="1.3 2.4"/>
<polyline points="323.8,185.6 333.4,176 352.5,173.2 362,177" fill="none" stroke="#fff" stroke-width="1" stroke-linejoin="round" stroke-linecap="butt" stroke-dasharray="1.3 2.4"/>
<polyline points="354.4,183.7 366.8,197 374.4,208.6" fill="none" stroke="#fff" stroke-width="1" stroke-linejoin="round" stroke-linecap="butt" stroke-dasharray="1.3 2.4"/>
<polyline points="757,0 768,24 773,53 754,89 738,121 728,143 722,151 706,172 677,175 649,165 555,207" fill="none" stroke="#fff" stroke-width="1" stroke-linejoin="round" stroke-linecap="butt" stroke-dasharray="1.3 2.4"/>
<polyline points="761,0 771,24 776,53 757,90 741,122 731,144" fill="none" stroke="#fff" stroke-width="1" stroke-linejoin="round" stroke-linecap="butt" stroke-dasharray="1.3 2.4"/>
<polyline points="719,151 720,183 730,231 735,302 743,320 746,350 746,378 740,404 732,437" fill="none" stroke="#fff" stroke-width="1" stroke-linejoin="round" stroke-linecap="butt" stroke-dasharray="1.3 2.4"/>
<polyline points="736,231 744,302" fill="none" stroke="#fff" stroke-width="1" stroke-linejoin="round" stroke-linecap="butt" stroke-dasharray="1.3 2.4"/>
<polyline points="742,231 750,300" fill="none" stroke="#fff" stroke-width="1" stroke-linejoin="round" stroke-linecap="butt" stroke-dasharray="1.3 2.4"/>
<polyline points="671,175 636,204 620,234 609,263 550,291 534,302" fill="none" stroke="#fff" stroke-width="1" stroke-linejoin="round" stroke-linecap="butt" stroke-dasharray="1.3 2.4"/>
<polyline points="258,302 255,350 261,374 267,382 291,414 310,434 315,452" fill="none" stroke="#fff" stroke-width="1" stroke-linejoin="round" stroke-linecap="butt" stroke-dasharray="1.3 2.4"/>
<polyline points="598,371 617,358 646,358 661,356" fill="none" stroke="#fff" stroke-width="1" stroke-linejoin="round" stroke-linecap="butt" stroke-dasharray="1.3 2.4"/>
<polyline points="747,414 783,445" fill="none" stroke="#fff" stroke-width="1" stroke-linejoin="round" stroke-linecap="butt" stroke-dasharray="1.3 2.4"/>
<polyline points="563,452 563,429 575,404" fill="none" stroke="#fff" stroke-width="1" stroke-linejoin="round" stroke-linecap="butt" stroke-dasharray="1.3 2.4"/>
</g>
<g>
<polyline points="0,6 24,21 49,38 75,46 108,53 143,60 151,60" fill="none" stroke="#c6c3a6" stroke-width="4.6" stroke-linejoin="round" stroke-linecap="round"/>
<polyline points="175,29 151,60 145,68 111,123 96,147 92,151 70,183 64,204 65,247 70,302" fill="none" stroke="#c6c3a6" stroke-width="4.6" stroke-linejoin="round" stroke-linecap="round"/>
<polyline points="142,60 175,110 185,135 191,151 207,151" fill="none" stroke="#c6c3a6" stroke-width="4.6" stroke-linejoin="round" stroke-linecap="round"/>
<polyline points="103,0 107,32 110,83 91,110" fill="none" stroke="#c6c3a6" stroke-width="4.6" stroke-linejoin="round" stroke-linecap="round"/>
<polyline points="49,38 68,67 80,102 110,126 156,151 191,170 230,195 267,215 291,234 334,237 347,245 369,255 394,253" fill="none" stroke="#c6c3a6" stroke-width="4.6" stroke-linejoin="round" stroke-linecap="round"/>
<polyline points="0,80 38,102 76,137 96,151 135,170 164,218 150,240 148,286 137,302" fill="none" stroke="#c6c3a6" stroke-width="4.6" stroke-linejoin="round" stroke-linecap="round"/>
<polyline points="24,0 24,21 29,41 8,83" fill="none" stroke="#c6c3a6" stroke-width="4.6" stroke-linejoin="round" stroke-linecap="round"/>
<polyline points="49,38 37,70 40,89 37,102" fill="none" stroke="#c6c3a6" stroke-width="4.6" stroke-linejoin="round" stroke-linecap="round"/>
<polyline points="0,115 14,115" fill="none" stroke="#c6c3a6" stroke-width="4.6" stroke-linejoin="round" stroke-linecap="round"/>
<polyline points="207,0 239,37 267,67 286,96 304,124" fill="none" stroke="#c6c3a6" stroke-width="4.6" stroke-linejoin="round" stroke-linecap="round"/>
<polyline points="267,89 242,112 213,139 204,151 185,188 175,199" fill="none" stroke="#c6c3a6" stroke-width="4.6" stroke-linejoin="round" stroke-linecap="round"/>
<polyline points="151,0 175,21 180,30" fill="none" stroke="#c6c3a6" stroke-width="4.6" stroke-linejoin="round" stroke-linecap="round"/>
<polyline points="267,70 299,43 331,14 343,3" fill="none" stroke="#c6c3a6" stroke-width="4.6" stroke-linejoin="round" stroke-linecap="round"/>
<polyline points="343,0 350,40 359,75 388,115 402,127" fill="none" stroke="#c6c3a6" stroke-width="4.6" stroke-linejoin="round" stroke-linecap="round"/>
<polyline points="372,0 382,32 388,64" fill="none" stroke="#c6c3a6" stroke-width="4.6" stroke-linejoin="round" stroke-linecap="round"/>
<polyline points="417,29 414,80 410,127" fill="none" stroke="#c6c3a6" stroke-width="4.6" stroke-linejoin="round" stroke-linecap="round"/>
<polyline points="418,48 471,54" fill="none" stroke="#c6c3a6" stroke-width="4.6" stroke-linejoin="round" stroke-linecap="round"/>
<polyline points="414,84 434,96 458,119" fill="none" stroke="#c6c3a6" stroke-width="4.6" stroke-linejoin="round" stroke-linecap="round"/>
<polyline points="479,37 528,37" fill="none" stroke="#c6c3a6" stroke-width="4.6" stroke-linejoin="round" stroke-linecap="round"/>
<polyline points="479,51 506,67 534,82" fill="none" stroke="#c6c3a6" stroke-width="4.6" stroke-linejoin="round" stroke-linecap="round"/>
<polyline points="320,126 366,118 369,132 320,139" fill="none" stroke="#c6c3a6" stroke-width="4.6" stroke-linejoin="round" stroke-linecap="round"/>
<polyline points="299,43 312,96 299,119 304,151" fill="none" stroke="#c6c3a6" stroke-width="4.6" stroke-linejoin="round" stroke-linecap="round"/>
<polyline points="696,57 706,64 719,38 733,38 762,29 757,6" fill="none" stroke="#c6c3a6" stroke-width="4.6" stroke-linejoin="round" stroke-linecap="round"/>
<polyline points="655,53 690,32" fill="none" stroke="#c6c3a6" stroke-width="4.6" stroke-linejoin="round" stroke-linecap="round"/>
<polyline points="655,54 652,76 638,96 617,143 614,151 603,161 572,227" fill="none" stroke="#c6c3a6" stroke-width="4.6" stroke-linejoin="round" stroke-linecap="round"/>
<polyline points="617,143 666,118 677,102" fill="none" stroke="#c6c3a6" stroke-width="4.6" stroke-linejoin="round" stroke-linecap="round"/>
<polyline points="666,118 660,151 661,302" fill="none" stroke="#c6c3a6" stroke-width="4.6" stroke-linejoin="round" stroke-linecap="round"/>
<polyline points="727,92 733,108 725,137 693,151" fill="none" stroke="#c6c3a6" stroke-width="4.6" stroke-linejoin="round" stroke-linecap="round"/>
<polyline points="762,29 770,53 757,83 725,137" fill="none" stroke="#c6c3a6" stroke-width="4.6" stroke-linejoin="round" stroke-linecap="round"/>
<polyline points="783,0 778,32 778,70" fill="none" stroke="#c6c3a6" stroke-width="4.6" stroke-linejoin="round" stroke-linecap="round"/>
<polyline points="725,140 783,132 800,135" fill="none" stroke="#c6c3a6" stroke-width="4.6" stroke-linejoin="round" stroke-linecap="round"/>
<polyline points="580,40 587,62 575,68 580,40" fill="none" stroke="#c6c3a6" stroke-width="4.6" stroke-linejoin="round" stroke-linecap="round"/>
<polyline points="547.6,92.2 535.2,98 520.9,111.3 506.5,129.5 497,141 488,150" fill="none" stroke="#c6c3a6" stroke-width="4.6" stroke-linejoin="round" stroke-linecap="round"/>
<polyline points="514,76 506.5,95 497,114 487,135" fill="none" stroke="#c6c3a6" stroke-width="4.6" stroke-linejoin="round" stroke-linecap="round"/>
<polyline points="578,176 600,159 608,162" fill="none" stroke="#c6c3a6" stroke-width="4.6" stroke-linejoin="round" stroke-linecap="round"/>
<polyline points="0,157 16,159 32,151" fill="none" stroke="#c6c3a6" stroke-width="4.6" stroke-linejoin="round" stroke-linecap="round"/>
<polyline points="92,151 118,199 121,253 127,283 137,302" fill="none" stroke="#c6c3a6" stroke-width="4.6" stroke-linejoin="round" stroke-linecap="round"/>
<polyline points="70,184 118,199" fill="none" stroke="#c6c3a6" stroke-width="4.6" stroke-linejoin="round" stroke-linecap="round"/>
<polyline points="0,205 40,202 64,183" fill="none" stroke="#c6c3a6" stroke-width="4.6" stroke-linejoin="round" stroke-linecap="round"/>
<polyline points="0,232 64,245 121,253 148,255" fill="none" stroke="#c6c3a6" stroke-width="4.6" stroke-linejoin="round" stroke-linecap="round"/>
<polyline points="0,275 70,283 127,283 147,290" fill="none" stroke="#c6c3a6" stroke-width="4.6" stroke-linejoin="round" stroke-linecap="round"/>
<polyline points="18,240 14,302" fill="none" stroke="#c6c3a6" stroke-width="4.6" stroke-linejoin="round" stroke-linecap="round"/>
<polyline points="5,205 10,231" fill="none" stroke="#c6c3a6" stroke-width="4.6" stroke-linejoin="round" stroke-linecap="round"/>
<polyline points="121,204 135,204 164,218" fill="none" stroke="#c6c3a6" stroke-width="4.6" stroke-linejoin="round" stroke-linecap="round"/>
<polyline points="135,167 147,151" fill="none" stroke="#c6c3a6" stroke-width="4.6" stroke-linejoin="round" stroke-linecap="round"/>
<polyline points="164,221 207,253 267,291 307,310" fill="none" stroke="#c6c3a6" stroke-width="4.6" stroke-linejoin="round" stroke-linecap="round"/>
<polyline points="188,218 239,250 267,269 307,290 320,302" fill="none" stroke="#c6c3a6" stroke-width="4.6" stroke-linejoin="round" stroke-linecap="round"/>
<polyline points="198,175 267,156" fill="none" stroke="#c6c3a6" stroke-width="4.6" stroke-linejoin="round" stroke-linecap="round"/>
<polyline points="220,188 267,223" fill="none" stroke="#c6c3a6" stroke-width="4.6" stroke-linejoin="round" stroke-linecap="round"/>
<polyline points="319,136 326.7,151.3 350.6,162.7" fill="none" stroke="#c6c3a6" stroke-width="4.6" stroke-linejoin="round" stroke-linecap="round"/>
<polyline points="364,136 365,162.7 374.4,181.8 379.2,202.8 381,212.4" fill="none" stroke="#c6c3a6" stroke-width="4.6" stroke-linejoin="round" stroke-linecap="round"/>
<polyline points="370,174 385,165 390,169 375,178" fill="none" stroke="#c6c3a6" stroke-width="4.6" stroke-linejoin="round" stroke-linecap="round"/>
<polyline points="398.3,145.5 406,167.5 409.7,193.3 411.7,222" fill="none" stroke="#c6c3a6" stroke-width="4.6" stroke-linejoin="round" stroke-linecap="round"/>
<polyline points="334,237 369,218 394,204 447,204" fill="none" stroke="#c6c3a6" stroke-width="4.6" stroke-linejoin="round" stroke-linecap="round"/>
<polyline points="363,161 379,199 382,215" fill="none" stroke="#c6c3a6" stroke-width="4.6" stroke-linejoin="round" stroke-linecap="round"/>
<polyline points="402,151 407,183 410,204 410,247 426,270 434,278" fill="none" stroke="#c6c3a6" stroke-width="4.6" stroke-linejoin="round" stroke-linecap="round"/>
<polyline points="366,170 407,172 458,164 474,151" fill="none" stroke="#c6c3a6" stroke-width="4.6" stroke-linejoin="round" stroke-linecap="round"/>
<polyline points="315,263 339,245" fill="none" stroke="#c6c3a6" stroke-width="4.6" stroke-linejoin="round" stroke-linecap="round"/>
<polyline points="312,270 353,272 379,263" fill="none" stroke="#c6c3a6" stroke-width="4.6" stroke-linejoin="round" stroke-linecap="round"/>
<polyline points="353,272 356,302" fill="none" stroke="#c6c3a6" stroke-width="4.6" stroke-linejoin="round" stroke-linecap="round"/>
<polyline points="267,291 291,282 312,270" fill="none" stroke="#c6c3a6" stroke-width="4.6" stroke-linejoin="round" stroke-linecap="round"/>
<polyline points="534,220 515,240 500,263 498,302" fill="none" stroke="#c6c3a6" stroke-width="4.6" stroke-linejoin="round" stroke-linecap="round"/>
<polyline points="658,151 646,175 622,215 574,250" fill="none" stroke="#c6c3a6" stroke-width="4.6" stroke-linejoin="round" stroke-linecap="round"/>
<polyline points="673,159 690,226 701,270 711,272 722,302" fill="none" stroke="#c6c3a6" stroke-width="4.6" stroke-linejoin="round" stroke-linecap="round"/>
<polyline points="622,215 642,215 730,180" fill="none" stroke="#c6c3a6" stroke-width="4.6" stroke-linejoin="round" stroke-linecap="round"/>
<polyline points="685,242 677,250 693,277 712,277" fill="none" stroke="#c6c3a6" stroke-width="4.6" stroke-linejoin="round" stroke-linecap="round"/>
<polyline points="677,250 650,274 652,302" fill="none" stroke="#c6c3a6" stroke-width="4.6" stroke-linejoin="round" stroke-linecap="round"/>
<polyline points="623,253 612,278 614,302 620,324" fill="none" stroke="#c6c3a6" stroke-width="4.6" stroke-linejoin="round" stroke-linecap="round"/>
<polyline points="740,196 738,207 757,243 762,302 778,350 800,307" fill="none" stroke="#c6c3a6" stroke-width="4.6" stroke-linejoin="round" stroke-linecap="round"/>
<polyline points="800,298 757,296 693,302" fill="none" stroke="#c6c3a6" stroke-width="4.6" stroke-linejoin="round" stroke-linecap="round"/>
<polyline points="789,253 779,302" fill="none" stroke="#c6c3a6" stroke-width="4.6" stroke-linejoin="round" stroke-linecap="round"/>
<polyline points="137,302 124,323 123,350 124,398 132,423 147,452" fill="none" stroke="#c6c3a6" stroke-width="4.6" stroke-linejoin="round" stroke-linecap="round"/>
<polyline points="0,353 102,351 124,331" fill="none" stroke="#c6c3a6" stroke-width="4.6" stroke-linejoin="round" stroke-linecap="round"/>
<polyline points="124,350 155,350 159,378" fill="none" stroke="#c6c3a6" stroke-width="4.6" stroke-linejoin="round" stroke-linecap="round"/>
<polyline points="16,302 21,323 16,351" fill="none" stroke="#c6c3a6" stroke-width="4.6" stroke-linejoin="round" stroke-linecap="round"/>
<polyline points="29,329 27,351" fill="none" stroke="#c6c3a6" stroke-width="4.6" stroke-linejoin="round" stroke-linecap="round"/>
<polyline points="78,329 81,351" fill="none" stroke="#c6c3a6" stroke-width="4.6" stroke-linejoin="round" stroke-linecap="round"/>
<polyline points="191,388 267,378 307,382" fill="none" stroke="#c6c3a6" stroke-width="4.6" stroke-linejoin="round" stroke-linecap="round"/>
<polyline points="191,388 147,452" fill="none" stroke="#c6c3a6" stroke-width="4.6" stroke-linejoin="round" stroke-linecap="round"/>
<polyline points="210,388 231,452" fill="none" stroke="#c6c3a6" stroke-width="4.6" stroke-linejoin="round" stroke-linecap="round"/>
<polyline points="86,429 102,452" fill="none" stroke="#c6c3a6" stroke-width="4.6" stroke-linejoin="round" stroke-linecap="round"/>
<polyline points="150,445 267,420 315,414" fill="none" stroke="#c6c3a6" stroke-width="4.6" stroke-linejoin="round" stroke-linecap="round"/>
<polyline points="175,452 267,433" fill="none" stroke="#c6c3a6" stroke-width="4.6" stroke-linejoin="round" stroke-linecap="round"/>
<polyline points="223,326 267,334 299,331 343,332 363,339 388,343 426,335 442,335 490,331" fill="none" stroke="#c6c3a6" stroke-width="4.6" stroke-linejoin="round" stroke-linecap="round"/>
<polyline points="299,302 304,334 307,366 320,398" fill="none" stroke="#c6c3a6" stroke-width="4.6" stroke-linejoin="round" stroke-linecap="round"/>
<polyline points="267,355 307,382 320,398" fill="none" stroke="#c6c3a6" stroke-width="4.6" stroke-linejoin="round" stroke-linecap="round"/>
<polyline points="267,369 291,385 315,414 331,429 356,445" fill="none" stroke="#c6c3a6" stroke-width="4.6" stroke-linejoin="round" stroke-linecap="round"/>
<polyline points="382,331 385,366 394,385 401,399" fill="none" stroke="#c6c3a6" stroke-width="4.6" stroke-linejoin="round" stroke-linecap="round"/>
<polyline points="423,348 417,363 388,378" fill="none" stroke="#c6c3a6" stroke-width="4.6" stroke-linejoin="round" stroke-linecap="round"/>
<polyline points="487,318 484,350 493,374" fill="none" stroke="#c6c3a6" stroke-width="4.6" stroke-linejoin="round" stroke-linecap="round"/>
<polyline points="490,388 514,414 534,429 550,426 574,452" fill="none" stroke="#c6c3a6" stroke-width="4.6" stroke-linejoin="round" stroke-linecap="round"/>
<polyline points="363,385 343,414 328,410" fill="none" stroke="#c6c3a6" stroke-width="4.6" stroke-linejoin="round" stroke-linecap="round"/>
<polyline points="331,429 347,410 366,391" fill="none" stroke="#c6c3a6" stroke-width="4.6" stroke-linejoin="round" stroke-linecap="round"/>
<polyline points="550,324 582,332 612,329 655,323 701,312 746,302" fill="none" stroke="#c6c3a6" stroke-width="4.6" stroke-linejoin="round" stroke-linecap="round"/>
<polyline points="658,302 655,323 661,355 652,401 652,434" fill="none" stroke="#c6c3a6" stroke-width="4.6" stroke-linejoin="round" stroke-linecap="round"/>
<polyline points="612,329 610,342 595,371 577,388" fill="none" stroke="#c6c3a6" stroke-width="4.6" stroke-linejoin="round" stroke-linecap="round"/>
<polyline points="610,340 639,347 638,359" fill="none" stroke="#c6c3a6" stroke-width="4.6" stroke-linejoin="round" stroke-linecap="round"/>
<polyline points="661,343 677,350 738,358 762,361 800,371" fill="none" stroke="#c6c3a6" stroke-width="4.6" stroke-linejoin="round" stroke-linecap="round"/>
<polyline points="703,312 738,358" fill="none" stroke="#c6c3a6" stroke-width="4.6" stroke-linejoin="round" stroke-linecap="round"/>
<polyline points="762,361 754,385 749,410 725,414 706,437" fill="none" stroke="#c6c3a6" stroke-width="4.6" stroke-linejoin="round" stroke-linecap="round"/>
<polyline points="754,385 776,378 783,401 800,414" fill="none" stroke="#c6c3a6" stroke-width="4.6" stroke-linejoin="round" stroke-linecap="round"/>
<polyline points="657,404 685,417 709,429" fill="none" stroke="#c6c3a6" stroke-width="4.6" stroke-linejoin="round" stroke-linecap="round"/>
<polyline points="747,414 800,452" fill="none" stroke="#c6c3a6" stroke-width="4.6" stroke-linejoin="round" stroke-linecap="round"/>
<polyline points="623,401 602,452" fill="none" stroke="#c6c3a6" stroke-width="4.6" stroke-linejoin="round" stroke-linecap="round"/>
<polyline points="593,394 606,407 620,391" fill="none" stroke="#c6c3a6" stroke-width="4.6" stroke-linejoin="round" stroke-linecap="round"/>
<polyline points="343.9,4 323.9,33.4 297.2,49.4 270.5,73.4 243.8,116.2 233,136" fill="none" stroke="#c6c3a6" stroke-width="6.4" stroke-linejoin="round" stroke-linecap="round"/>
<polyline points="658,151 646,175 622,215 574,250" fill="none" stroke="#c6c3a6" stroke-width="6.4" stroke-linejoin="round" stroke-linecap="round"/>
<polyline points="137,302 124,323 123,350 124,398 132,423 147,452" fill="none" stroke="#c6c3a6" stroke-width="6.4" stroke-linejoin="round" stroke-linecap="round"/>
<polyline points="426,335 388,343 363,339 343,332 299,331" fill="none" stroke="#c6c3a6" stroke-width="6.4" stroke-linejoin="round" stroke-linecap="round"/>
<polyline points="0,6 24,21 49,38 75,46 108,53 143,60 151,60" fill="none" stroke="#f4efa4" stroke-width="3.4" stroke-linejoin="round" stroke-linecap="round"/>
<polyline points="175,29 151,60 145,68 111,123 96,147 92,151 70,183 64,204 65,247 70,302" fill="none" stroke="#f4efa4" stroke-width="3.4" stroke-linejoin="round" stroke-linecap="round"/>
<polyline points="142,60 175,110 185,135 191,151 207,151" fill="none" stroke="#f4efa4" stroke-width="3.4" stroke-linejoin="round" stroke-linecap="round"/>
<polyline points="103,0 107,32 110,83 91,110" fill="none" stroke="#f4efa4" stroke-width="3.4" stroke-linejoin="round" stroke-linecap="round"/>
<polyline points="49,38 68,67 80,102 110,126 156,151 191,170 230,195 267,215 291,234 334,237 347,245 369,255 394,253" fill="none" stroke="#f4efa4" stroke-width="3.4" stroke-linejoin="round" stroke-linecap="round"/>
<polyline points="0,80 38,102 76,137 96,151 135,170 164,218 150,240 148,286 137,302" fill="none" stroke="#f4efa4" stroke-width="3.4" stroke-linejoin="round" stroke-linecap="round"/>
<polyline points="24,0 24,21 29,41 8,83" fill="none" stroke="#f4efa4" stroke-width="3.4" stroke-linejoin="round" stroke-linecap="round"/>
<polyline points="49,38 37,70 40,89 37,102" fill="none" stroke="#f4efa4" stroke-width="3.4" stroke-linejoin="round" stroke-linecap="round"/>
<polyline points="0,115 14,115" fill="none" stroke="#f4efa4" stroke-width="3.4" stroke-linejoin="round" stroke-linecap="round"/>
<polyline points="207,0 239,37 267,67 286,96 304,124" fill="none" stroke="#f4efa4" stroke-width="3.4" stroke-linejoin="round" stroke-linecap="round"/>
<polyline points="267,89 242,112 213,139 204,151 185,188 175,199" fill="none" stroke="#f4efa4" stroke-width="3.4" stroke-linejoin="round" stroke-linecap="round"/>
<polyline points="151,0 175,21 180,30" fill="none" stroke="#f4efa4" stroke-width="3.4" stroke-linejoin="round" stroke-linecap="round"/>
<polyline points="267,70 299,43 331,14 343,3" fill="none" stroke="#f4efa4" stroke-width="3.4" stroke-linejoin="round" stroke-linecap="round"/>
<polyline points="343,0 350,40 359,75 388,115 402,127" fill="none" stroke="#f4efa4" stroke-width="3.4" stroke-linejoin="round" stroke-linecap="round"/>
<polyline points="372,0 382,32 388,64" fill="none" stroke="#f4efa4" stroke-width="3.4" stroke-linejoin="round" stroke-linecap="round"/>
<polyline points="417,29 414,80 410,127" fill="none" stroke="#f4efa4" stroke-width="3.4" stroke-linejoin="round" stroke-linecap="round"/>
<polyline points="418,48 471,54" fill="none" stroke="#f4efa4" stroke-width="3.4" stroke-linejoin="round" stroke-linecap="round"/>
<polyline points="414,84 434,96 458,119" fill="none" stroke="#f4efa4" stroke-width="3.4" stroke-linejoin="round" stroke-linecap="round"/>
<polyline points="479,37 528,37" fill="none" stroke="#f4efa4" stroke-width="3.4" stroke-linejoin="round" stroke-linecap="round"/>
<polyline points="479,51 506,67 534,82" fill="none" stroke="#f4efa4" stroke-width="3.4" stroke-linejoin="round" stroke-linecap="round"/>
<polyline points="320,126 366,118 369,132 320,139" fill="none" stroke="#f4efa4" stroke-width="3.4" stroke-linejoin="round" stroke-linecap="round"/>
<polyline points="299,43 312,96 299,119 304,151" fill="none" stroke="#f4efa4" stroke-width="3.4" stroke-linejoin="round" stroke-linecap="round"/>
<polyline points="696,57 706,64 719,38 733,38 762,29 757,6" fill="none" stroke="#f4efa4" stroke-width="3.4" stroke-linejoin="round" stroke-linecap="round"/>
<polyline points="655,53 690,32" fill="none" stroke="#f4efa4" stroke-width="3.4" stroke-linejoin="round" stroke-linecap="round"/>
<polyline points="655,54 652,76 638,96 617,143 614,151 603,161 572,227" fill="none" stroke="#f4efa4" stroke-width="3.4" stroke-linejoin="round" stroke-linecap="round"/>
<polyline points="617,143 666,118 677,102" fill="none" stroke="#f4efa4" stroke-width="3.4" stroke-linejoin="round" stroke-linecap="round"/>
<polyline points="666,118 660,151 661,302" fill="none" stroke="#f4efa4" stroke-width="3.4" stroke-linejoin="round" stroke-linecap="round"/>
<polyline points="727,92 733,108 725,137 693,151" fill="none" stroke="#f4efa4" stroke-width="3.4" stroke-linejoin="round" stroke-linecap="round"/>
<polyline points="762,29 770,53 757,83 725,137" fill="none" stroke="#f4efa4" stroke-width="3.4" stroke-linejoin="round" stroke-linecap="round"/>
<polyline points="783,0 778,32 778,70" fill="none" stroke="#f4efa4" stroke-width="3.4" stroke-linejoin="round" stroke-linecap="round"/>
<polyline points="725,140 783,132 800,135" fill="none" stroke="#f4efa4" stroke-width="3.4" stroke-linejoin="round" stroke-linecap="round"/>
<polyline points="580,40 587,62 575,68 580,40" fill="none" stroke="#f4efa4" stroke-width="3.4" stroke-linejoin="round" stroke-linecap="round"/>
<polyline points="547.6,92.2 535.2,98 520.9,111.3 506.5,129.5 497,141 488,150" fill="none" stroke="#f4efa4" stroke-width="3.4" stroke-linejoin="round" stroke-linecap="round"/>
<polyline points="514,76 506.5,95 497,114 487,135" fill="none" stroke="#f4efa4" stroke-width="3.4" stroke-linejoin="round" stroke-linecap="round"/>
<polyline points="578,176 600,159 608,162" fill="none" stroke="#f4efa4" stroke-width="3.4" stroke-linejoin="round" stroke-linecap="round"/>
<polyline points="0,157 16,159 32,151" fill="none" stroke="#f4efa4" stroke-width="3.4" stroke-linejoin="round" stroke-linecap="round"/>
<polyline points="92,151 118,199 121,253 127,283 137,302" fill="none" stroke="#f4efa4" stroke-width="3.4" stroke-linejoin="round" stroke-linecap="round"/>
<polyline points="70,184 118,199" fill="none" stroke="#f4efa4" stroke-width="3.4" stroke-linejoin="round" stroke-linecap="round"/>
<polyline points="0,205 40,202 64,183" fill="none" stroke="#f4efa4" stroke-width="3.4" stroke-linejoin="round" stroke-linecap="round"/>
<polyline points="0,232 64,245 121,253 148,255" fill="none" stroke="#f4efa4" stroke-width="3.4" stroke-linejoin="round" stroke-linecap="round"/>
<polyline points="0,275 70,283 127,283 147,290" fill="none" stroke="#f4efa4" stroke-width="3.4" stroke-linejoin="round" stroke-linecap="round"/>
<polyline points="18,240 14,302" fill="none" stroke="#f4efa4" stroke-width="3.4" stroke-linejoin="round" stroke-linecap="round"/>
<polyline points="5,205 10,231" fill="none" stroke="#f4efa4" stroke-width="3.4" stroke-linejoin="round" stroke-linecap="round"/>
<polyline points="121,204 135,204 164,218" fill="none" stroke="#f4efa4" stroke-width="3.4" stroke-linejoin="round" stroke-linecap="round"/>
<polyline points="135,167 147,151" fill="none" stroke="#f4efa4" stroke-width="3.4" stroke-linejoin="round" stroke-linecap="round"/>
<polyline points="164,221 207,253 267,291 307,310" fill="none" stroke="#f4efa4" stroke-width="3.4" stroke-linejoin="round" stroke-linecap="round"/>
<polyline points="188,218 239,250 267,269 307,290 320,302" fill="none" stroke="#f4efa4" stroke-width="3.4" stroke-linejoin="round" stroke-linecap="round"/>
<polyline points="198,175 267,156" fill="none" stroke="#f4efa4" stroke-width="3.4" stroke-linejoin="round" stroke-linecap="round"/>
<polyline points="220,188 267,223" fill="none" stroke="#f4efa4" stroke-width="3.4" stroke-linejoin="round" stroke-linecap="round"/>
<polyline points="319,136 326.7,151.3 350.6,162.7" fill="none" stroke="#f4efa4" stroke-width="3.4" stroke-linejoin="round" stroke-linecap="round"/>
<polyline points="364,136 365,162.7 374.4,181.8 379.2,202.8 381,212.4" fill="none" stroke="#f4efa4" stroke-width="3.4" stroke-linejoin="round" stroke-linecap="round"/>
<polyline points="370,174 385,165 390,169 375,178" fill="none" stroke="#f4efa4" stroke-width="3.4" stroke-linejoin="round" stroke-linecap="round"/>
<polyline points="398.3,145.5 406,167.5 409.7,193.3 411.7,222" fill="none" stroke="#f4efa4" stroke-width="3.4" stroke-linejoin="round" stroke-linecap="round"/>
<polyline points="334,237 369,218 394,204 447,204" fill="none" stroke="#f4efa4" stroke-width="3.4" stroke-linejoin="round" stroke-linecap="round"/>
<polyline points="363,161 379,199 382,215" fill="none" stroke="#f4efa4" stroke-width="3.4" stroke-linejoin="round" stroke-linecap="round"/>
<polyline points="402,151 407,183 410,204 410,247 426,270 434,278" fill="none" stroke="#f4efa4" stroke-width="3.4" stroke-linejoin="round" stroke-linecap="round"/>
<polyline points="366,170 407,172 458,164 474,151" fill="none" stroke="#f4efa4" stroke-width="3.4" stroke-linejoin="round" stroke-linecap="round"/>
<polyline points="315,263 339,245" fill="none" stroke="#f4efa4" stroke-width="3.4" stroke-linejoin="round" stroke-linecap="round"/>
<polyline points="312,270 353,272 379,263" fill="none" stroke="#f4efa4" stroke-width="3.4" stroke-linejoin="round" stroke-linecap="round"/>
<polyline points="353,272 356,302" fill="none" stroke="#f4efa4" stroke-width="3.4" stroke-linejoin="round" stroke-linecap="round"/>
<polyline points="267,291 291,282 312,270" fill="none" stroke="#f4efa4" stroke-width="3.4" stroke-linejoin="round" stroke-linecap="round"/>
<polyline points="534,220 515,240 500,263 498,302" fill="none" stroke="#f4efa4" stroke-width="3.4" stroke-linejoin="round" stroke-linecap="round"/>
<polyline points="658,151 646,175 622,215 574,250" fill="none" stroke="#f4efa4" stroke-width="3.4" stroke-linejoin="round" stroke-linecap="round"/>
<polyline points="673,159 690,226 701,270 711,272 722,302" fill="none" stroke="#f4efa4" stroke-width="3.4" stroke-linejoin="round" stroke-linecap="round"/>
<polyline points="622,215 642,215 730,180" fill="none" stroke="#f4efa4" stroke-width="3.4" stroke-linejoin="round" stroke-linecap="round"/>
<polyline points="685,242 677,250 693,277 712,277" fill="none" stroke="#f4efa4" stroke-width="3.4" stroke-linejoin="round" stroke-linecap="round"/>
<polyline points="677,250 650,274 652,302" fill="none" stroke="#f4efa4" stroke-width="3.4" stroke-linejoin="round" stroke-linecap="round"/>
<polyline points="623,253 612,278 614,302 620,324" fill="none" stroke="#f4efa4" stroke-width="3.4" stroke-linejoin="round" stroke-linecap="round"/>
<polyline points="740,196 738,207 757,243 762,302 778,350 800,307" fill="none" stroke="#f4efa4" stroke-width="3.4" stroke-linejoin="round" stroke-linecap="round"/>
<polyline points="800,298 757,296 693,302" fill="none" stroke="#f4efa4" stroke-width="3.4" stroke-linejoin="round" stroke-linecap="round"/>
<polyline points="789,253 779,302" fill="none" stroke="#f4efa4" stroke-width="3.4" stroke-linejoin="round" stroke-linecap="round"/>
<polyline points="137,302 124,323 123,350 124,398 132,423 147,452" fill="none" stroke="#f4efa4" stroke-width="3.4" stroke-linejoin="round" stroke-linecap="round"/>
<polyline points="0,353 102,351 124,331" fill="none" stroke="#f4efa4" stroke-width="3.4" stroke-linejoin="round" stroke-linecap="round"/>
<polyline points="124,350 155,350 159,378" fill="none" stroke="#f4efa4" stroke-width="3.4" stroke-linejoin="round" stroke-linecap="round"/>
<polyline points="16,302 21,323 16,351" fill="none" stroke="#f4efa4" stroke-width="3.4" stroke-linejoin="round" stroke-linecap="round"/>
<polyline points="29,329 27,351" fill="none" stroke="#f4efa4" stroke-width="3.4" stroke-linejoin="round" stroke-linecap="round"/>
<polyline points="78,329 81,351" fill="none" stroke="#f4efa4" stroke-width="3.4" stroke-linejoin="round" stroke-linecap="round"/>
<polyline points="191,388 267,378 307,382" fill="none" stroke="#f4efa4" stroke-width="3.4" stroke-linejoin="round" stroke-linecap="round"/>
<polyline points="191,388 147,452" fill="none" stroke="#f4efa4" stroke-width="3.4" stroke-linejoin="round" stroke-linecap="round"/>
<polyline points="210,388 231,452" fill="none" stroke="#f4efa4" stroke-width="3.4" stroke-linejoin="round" stroke-linecap="round"/>
<polyline points="86,429 102,452" fill="none" stroke="#f4efa4" stroke-width="3.4" stroke-linejoin="round" stroke-linecap="round"/>
<polyline points="150,445 267,420 315,414" fill="none" stroke="#f4efa4" stroke-width="3.4" stroke-linejoin="round" stroke-linecap="round"/>
<polyline points="175,452 267,433" fill="none" stroke="#f4efa4" stroke-width="3.4" stroke-linejoin="round" stroke-linecap="round"/>
<polyline points="223,326 267,334 299,331 343,332 363,339 388,343 426,335 442,335 490,331" fill="none" stroke="#f4efa4" stroke-width="3.4" stroke-linejoin="round" stroke-linecap="round"/>
<polyline points="299,302 304,334 307,366 320,398" fill="none" stroke="#f4efa4" stroke-width="3.4" stroke-linejoin="round" stroke-linecap="round"/>
<polyline points="267,355 307,382 320,398" fill="none" stroke="#f4efa4" stroke-width="3.4" stroke-linejoin="round" stroke-linecap="round"/>
<polyline points="267,369 291,385 315,414 331,429 356,445" fill="none" stroke="#f4efa4" stroke-width="3.4" stroke-linejoin="round" stroke-linecap="round"/>
<polyline points="382,331 385,366 394,385 401,399" fill="none" stroke="#f4efa4" stroke-width="3.4" stroke-linejoin="round" stroke-linecap="round"/>
<polyline points="423,348 417,363 388,378" fill="none" stroke="#f4efa4" stroke-width="3.4" stroke-linejoin="round" stroke-linecap="round"/>
<polyline points="487,318 484,350 493,374" fill="none" stroke="#f4efa4" stroke-width="3.4" stroke-linejoin="round" stroke-linecap="round"/>
<polyline points="490,388 514,414 534,429 550,426 574,452" fill="none" stroke="#f4efa4" stroke-width="3.4" stroke-linejoin="round" stroke-linecap="round"/>
<polyline points="363,385 343,414 328,410" fill="none" stroke="#f4efa4" stroke-width="3.4" stroke-linejoin="round" stroke-linecap="round"/>
<polyline points="331,429 347,410 366,391" fill="none" stroke="#f4efa4" stroke-width="3.4" stroke-linejoin="round" stroke-linecap="round"/>
<polyline points="550,324 582,332 612,329 655,323 701,312 746,302" fill="none" stroke="#f4efa4" stroke-width="3.4" stroke-linejoin="round" stroke-linecap="round"/>
<polyline points="658,302 655,323 661,355 652,401 652,434" fill="none" stroke="#f4efa4" stroke-width="3.4" stroke-linejoin="round" stroke-linecap="round"/>
<polyline points="612,329 610,342 595,371 577,388" fill="none" stroke="#f4efa4" stroke-width="3.4" stroke-linejoin="round" stroke-linecap="round"/>
<polyline points="610,340 639,347 638,359" fill="none" stroke="#f4efa4" stroke-width="3.4" stroke-linejoin="round" stroke-linecap="round"/>
<polyline points="661,343 677,350 738,358 762,361 800,371" fill="none" stroke="#f4efa4" stroke-width="3.4" stroke-linejoin="round" stroke-linecap="round"/>
<polyline points="703,312 738,358" fill="none" stroke="#f4efa4" stroke-width="3.4" stroke-linejoin="round" stroke-linecap="round"/>
<polyline points="762,361 754,385 749,410 725,414 706,437" fill="none" stroke="#f4efa4" stroke-width="3.4" stroke-linejoin="round" stroke-linecap="round"/>
<polyline points="754,385 776,378 783,401 800,414" fill="none" stroke="#f4efa4" stroke-width="3.4" stroke-linejoin="round" stroke-linecap="round"/>
<polyline points="657,404 685,417 709,429" fill="none" stroke="#f4efa4" stroke-width="3.4" stroke-linejoin="round" stroke-linecap="round"/>
<polyline points="747,414 800,452" fill="none" stroke="#f4efa4" stroke-width="3.4" stroke-linejoin="round" stroke-linecap="round"/>
<polyline points="623,401 602,452" fill="none" stroke="#f4efa4" stroke-width="3.4" stroke-linejoin="round" stroke-linecap="round"/>
<polyline points="593,394 606,407 620,391" fill="none" stroke="#f4efa4" stroke-width="3.4" stroke-linejoin="round" stroke-linecap="round"/>
<polyline points="343.9,4 323.9,33.4 297.2,49.4 270.5,73.4 243.8,116.2 233,136" fill="none" stroke="#f4efa4" stroke-width="5.2" stroke-linejoin="round" stroke-linecap="round"/>
<polyline points="658,151 646,175 622,215 574,250" fill="none" stroke="#f4efa4" stroke-width="5.2" stroke-linejoin="round" stroke-linecap="round"/>
<polyline points="137,302 124,323 123,350 124,398 132,423 147,452" fill="none" stroke="#f4efa4" stroke-width="5.2" stroke-linejoin="round" stroke-linecap="round"/>
<polyline points="426,335 388,343 363,339 343,332 299,331" fill="none" stroke="#f4efa4" stroke-width="5.2" stroke-linejoin="round" stroke-linecap="round"/>
</g>
<g>
<polygon points="285.6,189.5 302.8,179 301.9,193.3 295.2,198 292.3,208.6 285.6,211.4 279.9,206.6" fill="#f3bc88"/>
<polyline points="474,0 474,61 468,121 463,124 426,123 400,141.7 362,158 343,167.5 304.7,174.2 293.3,183.7 279,201 267,213 258,226" fill="none" stroke="#e0b48a" stroke-width="6.6" stroke-linejoin="round" stroke-linecap="round"/>
<polyline points="279,201 265.6,183.7 257,161 245,140 241,132" fill="none" stroke="#e0b48a" stroke-width="6.6" stroke-linejoin="round" stroke-linecap="round"/>
<polyline points="515,0 534,18 571,24 582,32 587,45 598,62 623,75 649,86 674,97 681,96" fill="none" stroke="#e0b48a" stroke-width="6.6" stroke-linejoin="round" stroke-linecap="round"/>
<polyline points="534,29 544,64 548,86 550.5,92 547.6,107.5 542.8,116 525.6,127.6 509.4,141 496,155 481,172 467,190 458,207 449,226 439,255 434,278 436,302 441,350 439,385 441,414 450,437 460,452" fill="none" stroke="#e0b48a" stroke-width="6.6" stroke-linejoin="round" stroke-linecap="round"/>
<polyline points="690,0 693,32 689,72 684,96 677,102" fill="none" stroke="#e0b48a" stroke-width="6.6" stroke-linejoin="round" stroke-linecap="round"/>
<polyline points="719,0 695,29" fill="none" stroke="#e0b48a" stroke-width="6.6" stroke-linejoin="round" stroke-linecap="round"/>
<polyline points="692,89 711,94 754,81 800,67" fill="none" stroke="#e0b48a" stroke-width="6.6" stroke-linejoin="round" stroke-linecap="round"/>
<polyline points="687,99 709,127 725,151 732,175 765,220 800,259" fill="none" stroke="#e0b48a" stroke-width="6.6" stroke-linejoin="round" stroke-linecap="round"/>
<polyline points="550.5,92 554,86.5 564,82.7 579,72 598,62" fill="none" stroke="#e0b48a" stroke-width="6.6" stroke-linejoin="round" stroke-linecap="round"/>
<polyline points="258,226 252,237 233,266 223,302 220,332 226,363 244,417 258,452" fill="none" stroke="#e0b48a" stroke-width="6.6" stroke-linejoin="round" stroke-linecap="round"/>
<polyline points="468,121 472,135 479,150 486,160 496,155" fill="none" stroke="#e0b48a" stroke-width="6.6" stroke-linejoin="round" stroke-linecap="round"/>
<polyline points="467,148 479,158 486,165 481,172" fill="none" stroke="#e0b48a" stroke-width="6.6" stroke-linejoin="round" stroke-linecap="round"/>
<polyline points="496,155 548,203 572,231.5 587,247" fill="none" stroke="#e0b48a" stroke-width="6.6" stroke-linejoin="round" stroke-linecap="round"/>
<polyline points="534,302 550,263 587,247 630,240 704,229 765,220 800,205" fill="none" stroke="#e0b48a" stroke-width="6.6" stroke-linejoin="round" stroke-linecap="round"/>
<polyline points="0,323 96,327 159,331 220,332" fill="none" stroke="#e0b48a" stroke-width="6.6" stroke-linejoin="round" stroke-linecap="round"/>
<polyline points="220,358 191,371 153,394 115,418 71,424.5 49,431 20,442 5,452" fill="none" stroke="#e0b48a" stroke-width="6.6" stroke-linejoin="round" stroke-linecap="round"/>
<polyline points="0,358 10,391 21,434 25,452" fill="none" stroke="#e0b48a" stroke-width="6.6" stroke-linejoin="round" stroke-linecap="round"/>
<polyline points="277,452 299,426 316,401 331,393 363,385 382,388 401,399 426,396 442,391 474,385 506,378 534,382 548,391 558,393" fill="none" stroke="#e0b48a" stroke-width="6.6" stroke-linejoin="round" stroke-linecap="round"/>
<polyline points="534,315 525,350 512,369 506,378" fill="none" stroke="#e0b48a" stroke-width="6.6" stroke-linejoin="round" stroke-linecap="round"/>
<polyline points="517,324 544,326 548,334" fill="none" stroke="#e0b48a" stroke-width="6.6" stroke-linejoin="round" stroke-linecap="round"/>
<polyline points="800,417 792,437 789,452" fill="none" stroke="#e0b48a" stroke-width="6.6" stroke-linejoin="round" stroke-linecap="round"/>
<polyline points="728,151 732,175" fill="none" stroke="#e0b48a" stroke-width="6.6" stroke-linejoin="round" stroke-linecap="round"/>
<polyline points="474,0 474,61 468,121 463,124 426,123 400,141.7 362,158 343,167.5 304.7,174.2 293.3,183.7 279,201 267,213 258,226" fill="none" stroke="#f3bc88" stroke-width="5.4" stroke-linejoin="round" stroke-linecap="round"/>
<polyline points="279,201 265.6,183.7 257,161 245,140 241,132" fill="none" stroke="#f3bc88" stroke-width="5.4" stroke-linejoin="round" stroke-linecap="round"/>
<polyline points="515,0 534,18 571,24 582,32 587,45 598,62 623,75 649,86 674,97 681,96" fill="none" stroke="#f3bc88" stroke-width="5.4" stroke-linejoin="round" stroke-linecap="round"/>
<polyline points="534,29 544,64 548,86 550.5,92 547.6,107.5 542.8,116 525.6,127.6 509.4,141 496,155 481,172 467,190 458,207 449,226 439,255 434,278 436,302 441,350 439,385 441,414 450,437 460,452" fill="none" stroke="#f3bc88" stroke-width="5.4" stroke-linejoin="round" stroke-linecap="round"/>
<polyline points="690,0 693,32 689,72 684,96 677,102" fill="none" stroke="#f3bc88" stroke-width="5.4" stroke-linejoin="round" stroke-linecap="round"/>
<polyline points="719,0 695,29" fill="none" stroke="#f3bc88" stroke-width="5.4" stroke-linejoin="round" stroke-linecap="round"/>
<polyline points="692,89 711,94 754,81 800,67" fill="none" stroke="#f3bc88" stroke-width="5.4" stroke-linejoin="round" stroke-linecap="round"/>
<polyline points="687,99 709,127 725,151 732,175 765,220 800,259" fill="none" stroke="#f3bc88" stroke-width="5.4" stroke-linejoin="round" stroke-linecap="round"/>
<polyline points="550.5,92 554,86.5 564,82.7 579,72 598,62" fill="none" stroke="#f3bc88" stroke-width="5.4" stroke-linejoin="round" stroke-linecap="round"/>
<polyline points="258,226 252,237 233,266 223,302 220,332 226,363 244,417 258,452" fill="none" stroke="#f3bc88" stroke-width="5.4" stroke-linejoin="round" stroke-linecap="round"/>
<polyline points="468,121 472,135 479,150 486,160 496,155" fill="none" stroke="#f3bc88" stroke-width="5.4" stroke-linejoin="round" stroke-linecap="round"/>
<polyline points="467,148 479,158 486,165 481,172" fill="none" stroke="#f3bc88" stroke-width="5.4" stroke-linejoin="round" stroke-linecap="round"/>
<polyline points="496,155 548,203 572,231.5 587,247" fill="none" stroke="#f3bc88" stroke-width="5.4" stroke-linejoin="round" stroke-linecap="round"/>
<polyline points="534,302 550,263 587,247 630,240 704,229 765,220 800,205" fill="none" stroke="#f3bc88" stroke-width="5.4" stroke-linejoin="round" stroke-linecap="round"/>
<polyline points="0,323 96,327 159,331 220,332" fill="none" stroke="#f3bc88" stroke-width="5.4" stroke-linejoin="round" stroke-linecap="round"/>
<polyline points="220,358 191,371 153,394 115,418 71,424.5 49,431 20,442 5,452" fill="none" stroke="#f3bc88" stroke-width="5.4" stroke-linejoin="round" stroke-linecap="round"/>
<polyline points="0,358 10,391 21,434 25,452" fill="none" stroke="#f3bc88" stroke-width="5.4" stroke-linejoin="round" stroke-linecap="round"/>
<polyline points="277,452 299,426 316,401 331,393 363,385 382,388 401,399 426,396 442,391 474,385 506,378 534,382 548,391 558,393" fill="none" stroke="#f3bc88" stroke-width="5.4" stroke-linejoin="round" stroke-linecap="round"/>
<polyline points="534,315 525,350 512,369 506,378" fill="none" stroke="#f3bc88" stroke-width="5.4" stroke-linejoin="round" stroke-linecap="round"/>
<polyline points="517,324 544,326 548,334" fill="none" stroke="#f3bc88" stroke-width="5.4" stroke-linejoin="round" stroke-linecap="round"/>
<polyline points="800,417 792,437 789,452" fill="none" stroke="#f3bc88" stroke-width="5.4" stroke-linejoin="round" stroke-linecap="round"/>
<polyline points="728,151 732,175" fill="none" stroke="#f3bc88" stroke-width="5.4" stroke-linejoin="round" stroke-linecap="round"/>
</g>
<polyline points="175,0 186,19 199,53 220,89 234,118 241,132" fill="none" stroke="#e9c23a" stroke-width="8.6" stroke-linejoin="round" stroke-linecap="butt"/>
<polyline points="175,0 186,19 199,53 220,89 234,118 241,132" fill="none" stroke="#f9d02e" stroke-width="7.6" stroke-linejoin="round" stroke-linecap="butt"/>
<polyline points="548,334 559,353 569,382 582,402 614,425 646,437 693,437 717,441 738,452" fill="none" stroke="#e9c23a" stroke-width="8.6" stroke-linejoin="round" stroke-linecap="butt"/>
<polyline points="548,334 559,353 569,382 582,402 614,425 646,437 693,437 717,441 738,452" fill="none" stroke="#f9d02e" stroke-width="7.6" stroke-linejoin="round" stroke-linecap="butt"/>
<polyline points="247,144 257,161 267,185" fill="none" stroke="#6f7050" stroke-width="7" stroke-linejoin="round" stroke-linecap="butt" opacity=".5"/>
<polyline points="704,230 735,225 765,219" fill="none" stroke="#6f7050" stroke-width="8" stroke-linejoin="round" stroke-linecap="butt" opacity=".5"/>
<polyline points="437,282 438,350" fill="none" stroke="#6f7050" stroke-width="8" stroke-linejoin="round" stroke-linecap="butt" opacity=".5"/>
<polyline points="381,329 385,350" fill="none" stroke="#6f7050" stroke-width="5" stroke-linejoin="round" stroke-linecap="round" opacity=".5"/>
<polyline points="291,234 296,234" fill="none" stroke="#6f7050" stroke-width="6" stroke-linejoin="round" stroke-linecap="round" opacity=".5"/>
<polyline points="376,216 380,218" fill="none" stroke="#6f7050" stroke-width="6" stroke-linejoin="round" stroke-linecap="round" opacity=".5"/>
<polyline points="400,250 405,250" fill="none" stroke="#6f7050" stroke-width="6" stroke-linejoin="round" stroke-linecap="round" opacity=".5"/>
<polyline points="424,283 436,283" fill="none" stroke="#6f7050" stroke-width="6" stroke-linejoin="round" stroke-linecap="round" opacity=".5"/>
<polyline points="541,310 541,318" fill="none" stroke="#6f7050" stroke-width="6" stroke-linejoin="round" stroke-linecap="round" opacity=".5"/>
<polyline points="313,330 316,345" fill="none" stroke="#6f7050" stroke-width="5" stroke-linejoin="round" stroke-linecap="round" opacity=".5"/>
<polyline points="247,409 249,415" fill="none" stroke="#6f7050" stroke-width="6" stroke-linejoin="round" stroke-linecap="round" opacity=".5"/>
<g transform="translate(498.5,161) rotate(43.5)"><text x="0" y="0" font-size="12" textLength="68" lengthAdjust="spacing" fill="none" stroke="#fff" stroke-width="2.6" stroke-linejoin="round" opacity=".9">Zoobrücke</text><text x="0" y="0" font-size="12" textLength="68" lengthAdjust="spacing" fill="#000">Zoobrücke</text></g>
<g transform="translate(149,258) rotate(33)"><text x="0" y="0" font-size="11.5" textLength="92" lengthAdjust="spacing" fill="none" stroke="#fff" stroke-width="2.6" stroke-linejoin="round" opacity=".9">Weinsbergstraße</text><text x="0" y="0" font-size="11.5" textLength="92" lengthAdjust="spacing" fill="#000">Weinsbergstraße</text></g>
<text x="201" y="2" font-size="11" font-weight="bold" textLength="91" lengthAdjust="spacingAndGlyphs" fill="none" stroke="#fff" stroke-width="2.6" stroke-linejoin="round" opacity=".9">Bergheimerhöfe</text><text x="201" y="2" font-size="11" font-weight="bold" textLength="91" lengthAdjust="spacingAndGlyphs" fill="#000">Bergheimerhöfe</text>
<text x="217" y="36" font-size="11" font-weight="bold" textLength="90" lengthAdjust="spacingAndGlyphs" fill="none" stroke="#fff" stroke-width="2.6" stroke-linejoin="round" opacity=".9">Bilderstöckchen</text><text x="217" y="36" font-size="11" font-weight="bold" textLength="90" lengthAdjust="spacingAndGlyphs" fill="#000">Bilderstöckchen</text>
<text x="82" y="47" font-size="11" font-weight="bold" textLength="59" lengthAdjust="spacingAndGlyphs" fill="none" stroke="#fff" stroke-width="2.6" stroke-linejoin="round" opacity=".9">Ossendorf</text><text x="82" y="47" font-size="11" font-weight="bold" textLength="59" lengthAdjust="spacingAndGlyphs" fill="#000">Ossendorf</text>
<text x="15" y="117" font-size="11" font-weight="bold" textLength="60" lengthAdjust="spacingAndGlyphs" fill="none" stroke="#fff" stroke-width="2.6" stroke-linejoin="round" opacity=".9">Bickendorf</text><text x="15" y="117" font-size="11" font-weight="bold" textLength="60" lengthAdjust="spacingAndGlyphs" fill="#000">Bickendorf</text>
<text x="142" y="124" font-size="11" font-weight="bold" textLength="75" lengthAdjust="spacingAndGlyphs" fill="none" stroke="#fff" stroke-width="2.6" stroke-linejoin="round" opacity=".9">Neuehrenfeld</text><text x="142" y="124" font-size="11" font-weight="bold" textLength="75" lengthAdjust="spacingAndGlyphs" fill="#000">Neuehrenfeld</text>
<text x="150" y="213" font-size="11" font-weight="bold" textLength="52" lengthAdjust="spacingAndGlyphs" fill="none" stroke="#fff" stroke-width="2.6" stroke-linejoin="round" opacity=".9">Ehrenfeld</text><text x="150" y="213" font-size="11" font-weight="bold" textLength="52" lengthAdjust="spacingAndGlyphs" fill="#000">Ehrenfeld</text>
<text x="368" y="92" font-size="11" font-weight="bold" textLength="40" lengthAdjust="spacingAndGlyphs" fill="none" stroke="#fff" stroke-width="2.6" stroke-linejoin="round" opacity=".9">Nippes</text><text x="368" y="92" font-size="11" font-weight="bold" textLength="40" lengthAdjust="spacingAndGlyphs" fill="#000">Nippes</text>
<text x="666" y="112" font-size="11" font-weight="bold" textLength="47" lengthAdjust="spacingAndGlyphs" fill="none" stroke="#fff" stroke-width="2.6" stroke-linejoin="round" opacity=".9">Mülheim</text><text x="666" y="112" font-size="11" font-weight="bold" textLength="47" lengthAdjust="spacingAndGlyphs" fill="#000">Mülheim</text>
<text x="724" y="151" font-size="11" font-weight="bold" textLength="55" lengthAdjust="spacingAndGlyphs" fill="none" stroke="#fff" stroke-width="2.6" stroke-linejoin="round" opacity=".9">Buchheim</text><text x="724" y="151" font-size="11" font-weight="bold" textLength="55" lengthAdjust="spacingAndGlyphs" fill="#000">Buchheim</text>
<text x="660" y="200" font-size="11" font-weight="bold" textLength="53" lengthAdjust="spacingAndGlyphs" fill="none" stroke="#fff" stroke-width="2.6" stroke-linejoin="round" opacity=".9">Buchforst</text><text x="660" y="200" font-size="11" font-weight="bold" textLength="53" lengthAdjust="spacingAndGlyphs" fill="#000">Buchforst</text>
<text x="783" y="279" font-size="11" font-weight="bold" textLength="62" lengthAdjust="spacingAndGlyphs" fill="none" stroke="#fff" stroke-width="2.6" stroke-linejoin="round" opacity=".9">Höhenberg</text><text x="783" y="279" font-size="11" font-weight="bold" textLength="62" lengthAdjust="spacingAndGlyphs" fill="#000">Höhenberg</text>
<text x="701" y="310" font-size="11" font-weight="bold" textLength="22" lengthAdjust="spacingAndGlyphs" fill="none" stroke="#fff" stroke-width="2.6" stroke-linejoin="round" opacity=".9">Kalk</text><text x="701" y="310" font-size="11" font-weight="bold" textLength="22" lengthAdjust="spacingAndGlyphs" fill="#000">Kalk</text>
<text x="761" y="365" font-size="11" font-weight="bold" textLength="35" lengthAdjust="spacingAndGlyphs" fill="none" stroke="#fff" stroke-width="2.6" stroke-linejoin="round" opacity=".9">Vingst</text><text x="761" y="365" font-size="11" font-weight="bold" textLength="35" lengthAdjust="spacingAndGlyphs" fill="#000">Vingst</text>
<text x="603" y="386" font-size="11" font-weight="bold" textLength="58" lengthAdjust="spacingAndGlyphs" fill="none" stroke="#fff" stroke-width="2.6" stroke-linejoin="round" opacity=".9">Humboldt-</text><text x="603" y="386" font-size="11" font-weight="bold" textLength="58" lengthAdjust="spacingAndGlyphs" fill="#000">Humboldt-</text>
<text x="603" y="400" font-size="11" font-weight="bold" textLength="56" lengthAdjust="spacingAndGlyphs" fill="none" stroke="#fff" stroke-width="2.6" stroke-linejoin="round" opacity=".9">Gremberg</text><text x="603" y="400" font-size="11" font-weight="bold" textLength="56" lengthAdjust="spacingAndGlyphs" fill="#000">Gremberg</text>
<text x="45" y="322" font-size="11" font-weight="bold" textLength="60" lengthAdjust="spacingAndGlyphs" fill="none" stroke="#fff" stroke-width="2.6" stroke-linejoin="round" opacity=".9">Braunsfeld</text><text x="45" y="322" font-size="11" font-weight="bold" textLength="60" lengthAdjust="spacingAndGlyphs" fill="#000">Braunsfeld</text>
<text x="139" y="389" font-size="11" font-weight="bold" textLength="57" lengthAdjust="spacingAndGlyphs" fill="none" stroke="#fff" stroke-width="2.6" stroke-linejoin="round" opacity=".9">Lindenthal</text><text x="139" y="389" font-size="11" font-weight="bold" textLength="57" lengthAdjust="spacingAndGlyphs" fill="#000">Lindenthal</text>
<text x="359" y="426" font-size="11" font-weight="bold" textLength="47" lengthAdjust="spacingAndGlyphs" fill="none" stroke="#fff" stroke-width="2.6" stroke-linejoin="round" opacity=".9">Altstadt-</text><text x="359" y="426" font-size="11" font-weight="bold" textLength="47" lengthAdjust="spacingAndGlyphs" fill="#000">Altstadt-</text>
<text x="372" y="439" font-size="11" font-weight="bold" textLength="20" lengthAdjust="spacingAndGlyphs" fill="none" stroke="#fff" stroke-width="2.6" stroke-linejoin="round" opacity=".9">Süd</text><text x="372" y="439" font-size="11" font-weight="bold" textLength="20" lengthAdjust="spacingAndGlyphs" fill="#000">Süd</text>
<text x="373" y="291" font-size="20" font-weight="bold" textLength="44" lengthAdjust="spacingAndGlyphs" fill="none" stroke="#fff" stroke-width="2.6" stroke-linejoin="round" opacity=".9">Köln</text><text x="373" y="291" font-size="20" font-weight="bold" textLength="44" lengthAdjust="spacingAndGlyphs" fill="#000">Köln</text>
<rect x="514.5" y="7.5" width="17" height="15" rx="3" fill="#6b6b55" opacity=".55"/><rect x="512.5" y="5.5" width="17" height="15" rx="3" fill="#ffff00" stroke="#000" stroke-width="1"/><text x="521" y="16.6" text-anchor="middle" font-size="10.3" fill="#000">K1</text>
<rect x="624.5" y="75.5" width="24" height="15" rx="3" fill="#6b6b55" opacity=".55"/><rect x="622.5" y="73.5" width="24" height="15" rx="3" fill="#ffff00" stroke="#000" stroke-width="1"/><text x="634.5" y="84.6" text-anchor="middle" font-size="10.3" fill="#000">B51</text>
<rect x="667.5" y="71.5" width="39" height="15" rx="3" fill="#6b6b55" opacity=".55"/><rect x="665.5" y="69.5" width="39" height="15" rx="3" fill="#ffff00" stroke="#000" stroke-width="1"/><text x="685" y="80.6" text-anchor="middle" font-size="10.3" fill="#000">B51/B8</text>
<rect x="403.5" y="129.5" width="27" height="15" rx="3" fill="#6b6b55" opacity=".55"/><rect x="401.5" y="127.5" width="27" height="15" rx="3" fill="#ffff00" stroke="#000" stroke-width="1"/><text x="415" y="138.6" text-anchor="middle" font-size="10.3" fill="#000">L100</text>
<rect x="466.5" y="132.5" width="29" height="15" rx="3" fill="#6b6b55" opacity=".55"/><rect x="464.5" y="130.5" width="29" height="15" rx="3" fill="#ffff00" stroke="#000" stroke-width="1"/><text x="479" y="141.6" text-anchor="middle" font-size="10.3" fill="#000">B55A</text>
<rect x="233.5" y="133.5" width="22" height="14" rx="3" fill="#6b6b55" opacity=".55"/><rect x="231.5" y="131.5" width="22" height="14" rx="2" fill="#0000ff" stroke="#fff" stroke-width="1"/><text x="242.5" y="142.1" text-anchor="middle" font-size="10.3" fill="#fff">A57</text>
<rect x="251.5" y="217.5" width="28" height="15" rx="3" fill="#6b6b55" opacity=".55"/><rect x="249.5" y="215.5" width="28" height="15" rx="3" fill="#ffff00" stroke="#000" stroke-width="1"/><text x="263.5" y="226.6" text-anchor="middle" font-size="10.3" fill="#000">L100</text>
<rect x="449.5" y="201.5" width="24" height="15" rx="3" fill="#6b6b55" opacity=".55"/><rect x="447.5" y="199.5" width="24" height="15" rx="3" fill="#ffff00" stroke="#000" stroke-width="1"/><text x="459.5" y="210.6" text-anchor="middle" font-size="10.3" fill="#000">B51</text>
<rect x="598.5" y="242.5" width="30" height="15" rx="3" fill="#6b6b55" opacity=".55"/><rect x="596.5" y="240.5" width="30" height="15" rx="3" fill="#ffff00" stroke="#000" stroke-width="1"/><text x="611.5" y="251.6" text-anchor="middle" font-size="10.3" fill="#000">B55A</text>
<rect x="519.5" y="297.5" width="28" height="15" rx="3" fill="#6b6b55" opacity=".55"/><rect x="517.5" y="295.5" width="28" height="15" rx="3" fill="#ffff00" stroke="#000" stroke-width="1"/><text x="531.5" y="306.6" text-anchor="middle" font-size="10.3" fill="#000">L188</text>
<rect x="204.5" y="339.5" width="29" height="15" rx="3" fill="#6b6b55" opacity=".55"/><rect x="202.5" y="337.5" width="29" height="15" rx="3" fill="#ffff00" stroke="#000" stroke-width="1"/><text x="217" y="348.6" text-anchor="middle" font-size="10.3" fill="#000">B264</text>
<rect x="221.5" y="390.5" width="28" height="15" rx="3" fill="#6b6b55" opacity=".55"/><rect x="219.5" y="388.5" width="28" height="15" rx="3" fill="#ffff00" stroke="#000" stroke-width="1"/><text x="233.5" y="399.6" text-anchor="middle" font-size="10.3" fill="#000">L100</text>
<rect x="4.5" y="405.5" width="22" height="16" rx="3" fill="#6b6b55" opacity=".55"/><rect x="2.5" y="403.5" width="22" height="16" rx="3" fill="#ffff00" stroke="#000" stroke-width="1"/><text x="13.5" y="415.1" text-anchor="middle" font-size="10.3" fill="#000">L34</text>
<rect x="293.5" y="412.5" width="29" height="15" rx="3" fill="#6b6b55" opacity=".55"/><rect x="291.5" y="410.5" width="29" height="15" rx="3" fill="#ffff00" stroke="#000" stroke-width="1"/><text x="306" y="421.6" text-anchor="middle" font-size="10.3" fill="#000">B265</text>
<rect x="428.5" y="398.5" width="24" height="15" rx="3" fill="#6b6b55" opacity=".55"/><rect x="426.5" y="396.5" width="24" height="15" rx="3" fill="#ffff00" stroke="#000" stroke-width="1"/><text x="438.5" y="407.6" text-anchor="middle" font-size="10.3" fill="#000">B51</text>
<rect x="522.5" y="382.5" width="24" height="15" rx="3" fill="#6b6b55" opacity=".55"/><rect x="520.5" y="380.5" width="24" height="15" rx="3" fill="#ffff00" stroke="#000" stroke-width="1"/><text x="532.5" y="391.6" text-anchor="middle" font-size="10.3" fill="#000">B55</text>
<rect x="560.5" y="389.5" width="28" height="14" rx="3" fill="#6b6b55" opacity=".55"/><rect x="558.5" y="387.5" width="28" height="14" rx="2" fill="#0000ff" stroke="#fff" stroke-width="1"/><text x="572.5" y="398.1" text-anchor="middle" font-size="10.3" fill="#fff">A559</text>
<rect x="702.5" y="433.5" width="28" height="14" rx="3" fill="#6b6b55" opacity=".55"/><rect x="700.5" y="431.5" width="28" height="14" rx="2" fill="#0000ff" stroke="#fff" stroke-width="1"/><text x="714.5" y="442.1" text-anchor="middle" font-size="10.3" fill="#fff">A559</text>
<rect x="7.5" y="435.5" width="28" height="14" rx="3" fill="#6b6b55" opacity=".55"/><rect x="5.5" y="433.5" width="28" height="14" rx="3" fill="#ffff00" stroke="#000" stroke-width="1"/><text x="19.5" y="444.1" text-anchor="middle" font-size="10.3" fill="#000">B264</text>
<rect x="799.5" y="58.5" width="24" height="13" rx="3" fill="#6b6b55" opacity=".55"/><rect x="797.5" y="56.5" width="24" height="13" rx="3" fill="#ffff00" stroke="#000" stroke-width="1"/><text x="809.5" y="66.6" text-anchor="middle" font-size="10.3" fill="#000">B8</text>
<rect x="800.5" y="194.5" width="28" height="13" rx="3" fill="#6b6b55" opacity=".55"/><rect x="798.5" y="192.5" width="28" height="13" rx="3" fill="#ffff00" stroke="#000" stroke-width="1"/><text x="812.5" y="202.6" text-anchor="middle" font-size="10.3" fill="#000">L286</text>
<g fill="none" stroke="#f00000"><circle cx="400" cy="225" r="38.5" stroke-width="2.6"/><circle cx="400" cy="225" r="29" stroke-width="1.9"/><circle cx="400" cy="225" r="19" stroke-width="1"/><path d="M381,225H419M400,206V244" stroke-width=".9"/></g>
<g transform="translate(404,20)"><path d="M-3.2,-32.3 L-0.5,-32.3 L-0.5,-30 L1,-30.6 L5,-31.2 L9.5,-29.6 L10.3,-23.6 L12,-22 L23.6,-22 L17.6,-16.4 L11.6,-14.4 L5.8,-15.2 L4.2,-20.8 L3,-20.6 L3,-10 L-3.2,-10 Z" fill="#fff" opacity=".92"/><path d="M7.5,-12.6 L12.5,-12.2 L21.8,-7.9 L17,-6.4 L14.5,-9 L8.5,-10.6 Z" fill="#0a2a6a" stroke="#fff" stroke-width=".6"/><rect x="-2.1" y="-31.2" width=".9" height="21.2" fill="#000080"/><rect x=".2" y="-28.4" width="1.7" height="18.4" fill="#000080"/><path d="M1.4,-28.8 C3,-30.2 6.2,-30.6 8.5,-28.3 L9,-23.1 L11.3,-20.8 L21.6,-20.6 L16.5,-17.4 L11.3,-15.7 L6.7,-16.3 L5,-22 C4.2,-22.8 2.6,-22.4 1.4,-21 Z" fill="#00ff00" stroke="#000080" stroke-width=".9" stroke-linejoin="round"/><path d="M6.5,-29.3 L8.5,-28.3 L9,-23.1 L11.3,-20.8 L8,-17.5 L6.3,-19 L5,-22 Z" fill="#3fa070" opacity=".85"/></g>
<rect x="388.5" y="10.5" width="31" height="19" fill="#fff" stroke="#000" stroke-width="1"/><rect x="401.5" y="30" width="5" height="2" fill="#000"/><rect x="403.3" y="30.2" width="1.6" height="1.3" fill="#ffe000"/><text x="404" y="24" text-anchor="middle" font-size="10.67" fill="#000">1013</text>
<g transform="translate(263,34)"><path d="M-3.2,-32.3 L-0.5,-32.3 L-0.5,-30 L1,-30.6 L5,-31.2 L9.5,-29.6 L10.3,-23.6 L12,-22 L23.6,-22 L17.6,-16.4 L11.6,-14.4 L5.8,-15.2 L4.2,-20.8 L3,-20.6 L3,-10 L-3.2,-10 Z" fill="#fff" opacity=".92"/><path d="M7.5,-12.6 L12.5,-12.2 L21.8,-7.9 L17,-6.4 L14.5,-9 L8.5,-10.6 Z" fill="#0a2a6a" stroke="#fff" stroke-width=".6"/><rect x="-2.1" y="-31.2" width=".9" height="21.2" fill="#000080"/><rect x=".2" y="-28.4" width="1.7" height="18.4" fill="#000080"/><path d="M1.4,-28.8 C3,-30.2 6.2,-30.6 8.5,-28.3 L9,-23.1 L11.3,-20.8 L21.6,-20.6 L16.5,-17.4 L11.3,-15.7 L6.7,-16.3 L5,-22 C4.2,-22.8 2.6,-22.4 1.4,-21 Z" fill="#00ff00" stroke="#000080" stroke-width=".9" stroke-linejoin="round"/><path d="M6.5,-29.3 L8.5,-28.3 L9,-23.1 L11.3,-20.8 L8,-17.5 L6.3,-19 L5,-22 Z" fill="#3fa070" opacity=".85"/></g>
<rect x="247.5" y="24.5" width="31" height="19" fill="#fff" stroke="#000" stroke-width="1"/><rect x="260.5" y="44" width="5" height="2" fill="#000"/><rect x="262.3" y="44.2" width="1.6" height="1.3" fill="#ffe000"/><text x="263" y="38" text-anchor="middle" font-size="10.67" fill="#000">1015</text>
<g transform="translate(522,66)"><path d="M-3.2,-32.3 L-0.5,-32.3 L-0.5,-30 L1,-30.6 L5,-31.2 L9.5,-29.6 L10.3,-23.6 L12,-22 L23.6,-22 L17.6,-16.4 L11.6,-14.4 L5.8,-15.2 L4.2,-20.8 L3,-20.6 L3,-10 L-3.2,-10 Z" fill="#fff" opacity=".92"/><path d="M7.5,-12.6 L12.5,-12.2 L21.8,-7.9 L17,-6.4 L14.5,-9 L8.5,-10.6 Z" fill="#0a2a6a" stroke="#fff" stroke-width=".6"/><rect x="-2.1" y="-31.2" width=".9" height="21.2" fill="#000080"/><rect x=".2" y="-28.4" width="1.7" height="18.4" fill="#000080"/><path d="M1.4,-28.8 C3,-30.2 6.2,-30.6 8.5,-28.3 L9,-23.1 L11.3,-20.8 L21.6,-20.6 L16.5,-17.4 L11.3,-15.7 L6.7,-16.3 L5,-22 C4.2,-22.8 2.6,-22.4 1.4,-21 Z" fill="#00ff00" stroke="#000080" stroke-width=".9" stroke-linejoin="round"/><path d="M6.5,-29.3 L8.5,-28.3 L9,-23.1 L11.3,-20.8 L8,-17.5 L6.3,-19 L5,-22 Z" fill="#3fa070" opacity=".85"/></g>
<rect x="506.5" y="56.5" width="31" height="19" fill="#fff" stroke="#000" stroke-width="1"/><rect x="519.5" y="76" width="5" height="2" fill="#000"/><rect x="521.3" y="76.2" width="1.6" height="1.3" fill="#ffe000"/><text x="522" y="70" text-anchor="middle" font-size="10.67" fill="#000">1011</text>
<g transform="translate(388,88)"><path d="M-3.2,-32.3 L-0.5,-32.3 L-0.5,-30 L1,-30.6 L5,-31.2 L9.5,-29.6 L10.3,-23.6 L12,-22 L23.6,-22 L17.6,-16.4 L11.6,-14.4 L5.8,-15.2 L4.2,-20.8 L3,-20.6 L3,-10 L-3.2,-10 Z" fill="#fff" opacity=".92"/><path d="M7.5,-12.6 L12.5,-12.2 L21.8,-7.9 L17,-6.4 L14.5,-9 L8.5,-10.6 Z" fill="#0a2a6a" stroke="#fff" stroke-width=".6"/><rect x="-2.1" y="-31.2" width=".9" height="21.2" fill="#000080"/><rect x=".2" y="-28.4" width="1.7" height="18.4" fill="#000080"/><path d="M1.4,-28.8 C3,-30.2 6.2,-30.6 8.5,-28.3 L9,-23.1 L11.3,-20.8 L21.6,-20.6 L16.5,-17.4 L11.3,-15.7 L6.7,-16.3 L5,-22 C4.2,-22.8 2.6,-22.4 1.4,-21 Z" fill="#00ff00" stroke="#000080" stroke-width=".9" stroke-linejoin="round"/><path d="M6.5,-29.3 L8.5,-28.3 L9,-23.1 L11.3,-20.8 L8,-17.5 L6.3,-19 L5,-22 Z" fill="#3fa070" opacity=".85"/></g>
<rect x="372.5" y="78.5" width="31" height="19" fill="#fff" stroke="#000" stroke-width="1"/><rect x="385.5" y="98" width="5" height="2" fill="#000"/><rect x="387.3" y="98.2" width="1.6" height="1.3" fill="#ffe000"/><text x="388" y="92" text-anchor="middle" font-size="10.67" fill="#000">1008</text>
<g transform="translate(179,122)"><path d="M-3.2,-32.3 L-0.5,-32.3 L-0.5,-30 L1,-30.6 L5,-31.2 L9.5,-29.6 L10.3,-23.6 L12,-22 L23.6,-22 L17.6,-16.4 L11.6,-14.4 L5.8,-15.2 L4.2,-20.8 L3,-20.6 L3,-10 L-3.2,-10 Z" fill="#fff" opacity=".92"/><path d="M7.5,-12.6 L12.5,-12.2 L21.8,-7.9 L17,-6.4 L14.5,-9 L8.5,-10.6 Z" fill="#0a2a6a" stroke="#fff" stroke-width=".6"/><rect x="-2.1" y="-31.2" width=".9" height="21.2" fill="#000080"/><rect x=".2" y="-28.4" width="1.7" height="18.4" fill="#000080"/><path d="M1.4,-28.8 C3,-30.2 6.2,-30.6 8.5,-28.3 L9,-23.1 L11.3,-20.8 L21.6,-20.6 L16.5,-17.4 L11.3,-15.7 L6.7,-16.3 L5,-22 C4.2,-22.8 2.6,-22.4 1.4,-21 Z" fill="#00ff00" stroke="#000080" stroke-width=".9" stroke-linejoin="round"/><path d="M6.5,-29.3 L8.5,-28.3 L9,-23.1 L11.3,-20.8 L8,-17.5 L6.3,-19 L5,-22 Z" fill="#3fa070" opacity=".85"/></g>
<rect x="163.5" y="112.5" width="31" height="19" fill="#fff" stroke="#000" stroke-width="1"/><rect x="176.5" y="132" width="5" height="2" fill="#000"/><rect x="178.3" y="132.2" width="1.6" height="1.3" fill="#ffe000"/><text x="179" y="126" text-anchor="middle" font-size="10.67" fill="#000">1014</text>
<g transform="translate(176,211)"><path d="M-3.2,-32.3 L-0.5,-32.3 L-0.5,-30 L1,-30.6 L5,-31.2 L9.5,-29.6 L10.3,-23.6 L12,-22 L23.6,-22 L17.6,-16.4 L11.6,-14.4 L5.8,-15.2 L4.2,-20.8 L3,-20.6 L3,-10 L-3.2,-10 Z" fill="#fff" opacity=".92"/><path d="M7.5,-12.6 L12.5,-12.2 L21.8,-7.9 L17,-6.4 L14.5,-9 L8.5,-10.6 Z" fill="#0a2a6a" stroke="#fff" stroke-width=".6"/><rect x="-2.1" y="-31.2" width=".9" height="21.2" fill="#000080"/><rect x=".2" y="-28.4" width="1.7" height="18.4" fill="#000080"/><path d="M1.4,-28.8 C3,-30.2 6.2,-30.6 8.5,-28.3 L9,-23.1 L11.3,-20.8 L21.6,-20.6 L16.5,-17.4 L11.3,-15.7 L6.7,-16.3 L5,-22 C4.2,-22.8 2.6,-22.4 1.4,-21 Z" fill="#00ff00" stroke="#000080" stroke-width=".9" stroke-linejoin="round"/><path d="M6.5,-29.3 L8.5,-28.3 L9,-23.1 L11.3,-20.8 L8,-17.5 L6.3,-19 L5,-22 Z" fill="#3fa070" opacity=".85"/></g>
<rect x="160.5" y="201.5" width="31" height="19" fill="#fff" stroke="#000" stroke-width="1"/><rect x="173.5" y="221" width="5" height="2" fill="#000"/><rect x="175.3" y="221.2" width="1.6" height="1.3" fill="#ffe000"/><text x="176" y="215" text-anchor="middle" font-size="10.67" fill="#000">1009</text>
<g transform="translate(394,286)"><path d="M-3.2,-32.3 L-0.5,-32.3 L-0.5,-30 L1,-30.6 L5,-31.2 L9.5,-29.6 L10.3,-23.6 L12,-22 L23.6,-22 L17.6,-16.4 L11.6,-14.4 L5.8,-15.2 L4.2,-20.8 L3,-20.6 L3,-10 L-3.2,-10 Z" fill="#fff" opacity=".92"/><path d="M7.5,-12.6 L12.5,-12.2 L21.8,-7.9 L17,-6.4 L14.5,-9 L8.5,-10.6 Z" fill="#0a2a6a" stroke="#fff" stroke-width=".6"/><rect x="-2.1" y="-31.2" width=".9" height="21.2" fill="#000080"/><rect x=".2" y="-28.4" width="1.7" height="18.4" fill="#000080"/><path d="M1.4,-28.8 C3,-30.2 6.2,-30.6 8.5,-28.3 L9,-23.1 L11.3,-20.8 L21.6,-20.6 L16.5,-17.4 L11.3,-15.7 L6.7,-16.3 L5,-22 C4.2,-22.8 2.6,-22.4 1.4,-21 Z" fill="#00ff00" stroke="#000080" stroke-width=".9" stroke-linejoin="round"/><path d="M6.5,-29.3 L8.5,-28.3 L9,-23.1 L11.3,-20.8 L8,-17.5 L6.3,-19 L5,-22 Z" fill="#3fa070" opacity=".85"/></g>
<rect x="378.5" y="276.5" width="31" height="19" fill="#fff" stroke="#000" stroke-width="1"/><rect x="391.5" y="296" width="5" height="2" fill="#000"/><rect x="393.3" y="296.2" width="1.6" height="1.3" fill="#ffe000"/><text x="394" y="290" text-anchor="middle" font-size="10.67" fill="#000">1001</text>
<g transform="translate(371,318)"><path d="M-3.2,-32.3 L-0.5,-32.3 L-0.5,-30 L1,-30.6 L5,-31.2 L9.5,-29.6 L10.3,-23.6 L12,-22 L23.6,-22 L17.6,-16.4 L11.6,-14.4 L5.8,-15.2 L4.2,-20.8 L3,-20.6 L3,-10 L-3.2,-10 Z" fill="#fff" opacity=".92"/><path d="M7.5,-12.6 L12.5,-12.2 L21.8,-7.9 L17,-6.4 L14.5,-9 L8.5,-10.6 Z" fill="#0a2a6a" stroke="#fff" stroke-width=".6"/><rect x="-2.1" y="-31.2" width=".9" height="21.2" fill="#000080"/><rect x=".2" y="-28.4" width="1.7" height="18.4" fill="#000080"/><path d="M1.4,-28.8 C3,-30.2 6.2,-30.6 8.5,-28.3 L9,-23.1 L11.3,-20.8 L21.6,-20.6 L16.5,-17.4 L11.3,-15.7 L6.7,-16.3 L5,-22 C4.2,-22.8 2.6,-22.4 1.4,-21 Z" fill="#00ff00" stroke="#000080" stroke-width=".9" stroke-linejoin="round"/><path d="M6.5,-29.3 L8.5,-28.3 L9,-23.1 L11.3,-20.8 L8,-17.5 L6.3,-19 L5,-22 Z" fill="#3fa070" opacity=".85"/></g>
<rect x="355.5" y="308.5" width="31" height="19" fill="#fff" stroke="#000" stroke-width="1"/><rect x="368.5" y="328" width="5" height="2" fill="#000"/><rect x="370.3" y="328.2" width="1.6" height="1.3" fill="#ffe000"/><text x="371" y="322" text-anchor="middle" font-size="10.67" fill="#000">1002</text>
<g transform="translate(513,342)"><path d="M-3.2,-32.3 L-0.5,-32.3 L-0.5,-30 L1,-30.6 L5,-31.2 L9.5,-29.6 L10.3,-23.6 L12,-22 L23.6,-22 L17.6,-16.4 L11.6,-14.4 L5.8,-15.2 L4.2,-20.8 L3,-20.6 L3,-10 L-3.2,-10 Z" fill="#fff" opacity=".92"/><path d="M7.5,-12.6 L12.5,-12.2 L21.8,-7.9 L17,-6.4 L14.5,-9 L8.5,-10.6 Z" fill="#0a2a6a" stroke="#fff" stroke-width=".6"/><rect x="-2.1" y="-31.2" width=".9" height="21.2" fill="#000080"/><rect x=".2" y="-28.4" width="1.7" height="18.4" fill="#000080"/><path d="M1.4,-28.8 C3,-30.2 6.2,-30.6 8.5,-28.3 L9,-23.1 L11.3,-20.8 L21.6,-20.6 L16.5,-17.4 L11.3,-15.7 L6.7,-16.3 L5,-22 C4.2,-22.8 2.6,-22.4 1.4,-21 Z" fill="#00ff00" stroke="#000080" stroke-width=".9" stroke-linejoin="round"/><path d="M6.5,-29.3 L8.5,-28.3 L9,-23.1 L11.3,-20.8 L8,-17.5 L6.3,-19 L5,-22 Z" fill="#3fa070" opacity=".85"/></g>
<rect x="497.5" y="332.5" width="31" height="19" fill="#fff" stroke="#000" stroke-width="1"/><rect x="510.5" y="352" width="5" height="2" fill="#000"/><rect x="512.3" y="352.2" width="1.6" height="1.3" fill="#ffe000"/><text x="513" y="346" text-anchor="middle" font-size="10.67" fill="#000">1006</text>
<g transform="translate(348,368)"><path d="M-3.2,-32.3 L-0.5,-32.3 L-0.5,-30 L1,-30.6 L5,-31.2 L9.5,-29.6 L10.3,-23.6 L12,-22 L23.6,-22 L17.6,-16.4 L11.6,-14.4 L5.8,-15.2 L4.2,-20.8 L3,-20.6 L3,-10 L-3.2,-10 Z" fill="#fff" opacity=".92"/><path d="M7.5,-12.6 L12.5,-12.2 L21.8,-7.9 L17,-6.4 L14.5,-9 L8.5,-10.6 Z" fill="#0a2a6a" stroke="#fff" stroke-width=".6"/><rect x="-2.1" y="-31.2" width=".9" height="21.2" fill="#000080"/><rect x=".2" y="-28.4" width="1.7" height="18.4" fill="#000080"/><path d="M1.4,-28.8 C3,-30.2 6.2,-30.6 8.5,-28.3 L9,-23.1 L11.3,-20.8 L21.6,-20.6 L16.5,-17.4 L11.3,-15.7 L6.7,-16.3 L5,-22 C4.2,-22.8 2.6,-22.4 1.4,-21 Z" fill="#00ff00" stroke="#000080" stroke-width=".9" stroke-linejoin="round"/><path d="M6.5,-29.3 L8.5,-28.3 L9,-23.1 L11.3,-20.8 L8,-17.5 L6.3,-19 L5,-22 Z" fill="#3fa070" opacity=".85"/></g>
<rect x="332.5" y="358.5" width="31" height="19" fill="#fff" stroke="#000" stroke-width="1"/><rect x="345.5" y="378" width="5" height="2" fill="#000"/><rect x="347.3" y="378.2" width="1.6" height="1.3" fill="#ffe000"/><text x="348" y="372" text-anchor="middle" font-size="10.67" fill="#000">1005</text>
<g transform="translate(169,386)"><path d="M-3.2,-32.3 L-0.5,-32.3 L-0.5,-30 L1,-30.6 L5,-31.2 L9.5,-29.6 L10.3,-23.6 L12,-22 L23.6,-22 L17.6,-16.4 L11.6,-14.4 L5.8,-15.2 L4.2,-20.8 L3,-20.6 L3,-10 L-3.2,-10 Z" fill="#fff" opacity=".92"/><path d="M7.5,-12.6 L12.5,-12.2 L21.8,-7.9 L17,-6.4 L14.5,-9 L8.5,-10.6 Z" fill="#0a2a6a" stroke="#fff" stroke-width=".6"/><rect x="-2.1" y="-31.2" width=".9" height="21.2" fill="#000080"/><rect x=".2" y="-28.4" width="1.7" height="18.4" fill="#000080"/><path d="M1.4,-28.8 C3,-30.2 6.2,-30.6 8.5,-28.3 L9,-23.1 L11.3,-20.8 L21.6,-20.6 L16.5,-17.4 L11.3,-15.7 L6.7,-16.3 L5,-22 C4.2,-22.8 2.6,-22.4 1.4,-21 Z" fill="#00ff00" stroke="#000080" stroke-width=".9" stroke-linejoin="round"/><path d="M6.5,-29.3 L8.5,-28.3 L9,-23.1 L11.3,-20.8 L8,-17.5 L6.3,-19 L5,-22 Z" fill="#3fa070" opacity=".85"/></g>
<rect x="153.5" y="376.5" width="31" height="19" fill="#fff" stroke="#000" stroke-width="1"/><rect x="166.5" y="396" width="5" height="2" fill="#000"/><rect x="168.3" y="396.2" width="1.6" height="1.3" fill="#ffe000"/><text x="169" y="390" text-anchor="middle" font-size="10.67" fill="#000">1010</text>
<g transform="translate(631,390)"><path d="M-3.2,-32.3 L-0.5,-32.3 L-0.5,-30 L1,-30.6 L5,-31.2 L9.5,-29.6 L10.3,-23.6 L12,-22 L23.6,-22 L17.6,-16.4 L11.6,-14.4 L5.8,-15.2 L4.2,-20.8 L3,-20.6 L3,-10 L-3.2,-10 Z" fill="#fff" opacity=".92"/><path d="M7.5,-12.6 L12.5,-12.2 L21.8,-7.9 L17,-6.4 L14.5,-9 L8.5,-10.6 Z" fill="#0a2a6a" stroke="#fff" stroke-width=".6"/><rect x="-2.1" y="-31.2" width=".9" height="21.2" fill="#000080"/><rect x=".2" y="-28.4" width="1.7" height="18.4" fill="#000080"/><path d="M1.4,-28.8 C3,-30.2 6.2,-30.6 8.5,-28.3 L9,-23.1 L11.3,-20.8 L21.6,-20.6 L16.5,-17.4 L11.3,-15.7 L6.7,-16.3 L5,-22 C4.2,-22.8 2.6,-22.4 1.4,-21 Z" fill="#00ff00" stroke="#000080" stroke-width=".9" stroke-linejoin="round"/><path d="M6.5,-29.3 L8.5,-28.3 L9,-23.1 L11.3,-20.8 L8,-17.5 L6.3,-19 L5,-22 Z" fill="#3fa070" opacity=".85"/></g>
<rect x="615.5" y="380.5" width="31" height="19" fill="#fff" stroke="#000" stroke-width="1"/><rect x="628.5" y="400" width="5" height="2" fill="#000"/><rect x="630.3" y="400.2" width="1.6" height="1.3" fill="#ffe000"/><text x="631" y="394" text-anchor="middle" font-size="10.67" fill="#000">1012</text>
<g transform="translate(382,432)"><path d="M-3.2,-32.3 L-0.5,-32.3 L-0.5,-30 L1,-30.6 L5,-31.2 L9.5,-29.6 L10.3,-23.6 L12,-22 L23.6,-22 L17.6,-16.4 L11.6,-14.4 L5.8,-15.2 L4.2,-20.8 L3,-20.6 L3,-10 L-3.2,-10 Z" fill="#fff" opacity=".92"/><path d="M7.5,-12.6 L12.5,-12.2 L21.8,-7.9 L17,-6.4 L14.5,-9 L8.5,-10.6 Z" fill="#0a2a6a" stroke="#fff" stroke-width=".6"/><rect x="-2.1" y="-31.2" width=".9" height="21.2" fill="#000080"/><rect x=".2" y="-28.4" width="1.7" height="18.4" fill="#000080"/><path d="M1.4,-28.8 C3,-30.2 6.2,-30.6 8.5,-28.3 L9,-23.1 L11.3,-20.8 L21.6,-20.6 L16.5,-17.4 L11.3,-15.7 L6.7,-16.3 L5,-22 C4.2,-22.8 2.6,-22.4 1.4,-21 Z" fill="#00ff00" stroke="#000080" stroke-width=".9" stroke-linejoin="round"/><path d="M6.5,-29.3 L8.5,-28.3 L9,-23.1 L11.3,-20.8 L8,-17.5 L6.3,-19 L5,-22 Z" fill="#3fa070" opacity=".85"/></g>
<rect x="366.5" y="422.5" width="31" height="19" fill="#fff" stroke="#000" stroke-width="1"/><rect x="379.5" y="442" width="5" height="2" fill="#000"/><rect x="381.3" y="442.2" width="1.6" height="1.3" fill="#ffe000"/><text x="382" y="436" text-anchor="middle" font-size="10.67" fill="#000">1007</text>
<g transform="translate(401,226)"><path d="M-3.2,-32.3 L-0.5,-32.3 L-0.5,-30 L1,-30.6 L5,-31.2 L9.5,-29.6 L10.3,-23.6 L12,-22 L23.6,-22 L17.6,-16.4 L11.6,-14.4 L5.8,-15.2 L4.2,-20.8 L3,-20.6 L3,-10 L-3.2,-10 Z" fill="#fff" opacity=".92"/><path d="M7.5,-12.6 L12.5,-12.2 L21.8,-7.9 L17,-6.4 L14.5,-9 L8.5,-10.6 Z" fill="#0a2a6a" stroke="#fff" stroke-width=".6"/><rect x="-2.1" y="-31.2" width=".9" height="21.2" fill="#000080"/><rect x=".2" y="-28.4" width="1.7" height="18.4" fill="#000080"/><path d="M1.4,-28.8 C3,-30.2 6.2,-30.6 8.5,-28.3 L9,-23.1 L11.3,-20.8 L21.6,-20.6 L16.5,-17.4 L11.3,-15.7 L6.7,-16.3 L5,-22 C4.2,-22.8 2.6,-22.4 1.4,-21 Z" fill="#0010e8" stroke="#000080" stroke-width=".9" stroke-linejoin="round"/><path d="M6.5,-29.3 L8.5,-28.3 L9,-23.1 L11.3,-20.8 L8,-17.5 L6.3,-19 L5,-22 Z" fill="#0a2a8a" opacity=".85"/></g>
<rect x="393.5" y="216.5" width="13" height="19" fill="#fff" stroke="#000" stroke-width="1"/><text x="399" y="229" text-anchor="middle" font-size="10.67" fill="#000">1</text>
<g stroke="#3030e8" stroke-opacity=".62" stroke-width="5" stroke-linecap="butt">
<line x1="400.5" y1="228.2" x2="388.5" y2="91.2"/>
<line x1="388.5" y1="91.2" x2="404.5" y2="23.2"/>
<line x1="404.5" y1="23.2" x2="176.5" y2="214.2"/>
<line x1="176.5" y1="214.2" x2="179.5" y2="125.2"/>
<line x1="179.5" y1="125.2" x2="263.5" y2="37.2"/>
<line x1="263.5" y1="37.2" x2="522.5" y2="69.2"/>
<line x1="522.5" y1="69.2" x2="400.5" y2="228.2"/>
<line x1="176.5" y1="214.2" x2="169.5" y2="389.2"/>
<line x1="169.5" y1="389.2" x2="371.5" y2="321.2"/>
<line x1="371.5" y1="321.2" x2="513.5" y2="345.2"/>
<line x1="513.5" y1="345.2" x2="382.5" y2="435.2"/>
<line x1="382.5" y1="435.2" x2="348.5" y2="371.2"/>
<line x1="348.5" y1="371.2" x2="631.5" y2="393.2"/>
<line x1="631.5" y1="393.2" x2="394.5" y2="289.2"/>
<line x1="394.5" y1="289.2" x2="176.5" y2="214.2"/>
</g>
<rect x=".5" y="432.5" width="82" height="19" fill="#ececec" fill-opacity=".6" stroke="#000" stroke-width="1"/>
<text x="4.5" y="445.5" font-size="9.3" fill="#000" textLength="73" lengthAdjust="spacing">PTV, HERE, AND</text>
</svg></div></div></div>
<div id="sb" class="abs"><div class="la"></div><div class="ra"></div><div class="thumb"></div><div class="grip"></div></div>
<div id="rborder" class="abs"></div>
</body></html>
